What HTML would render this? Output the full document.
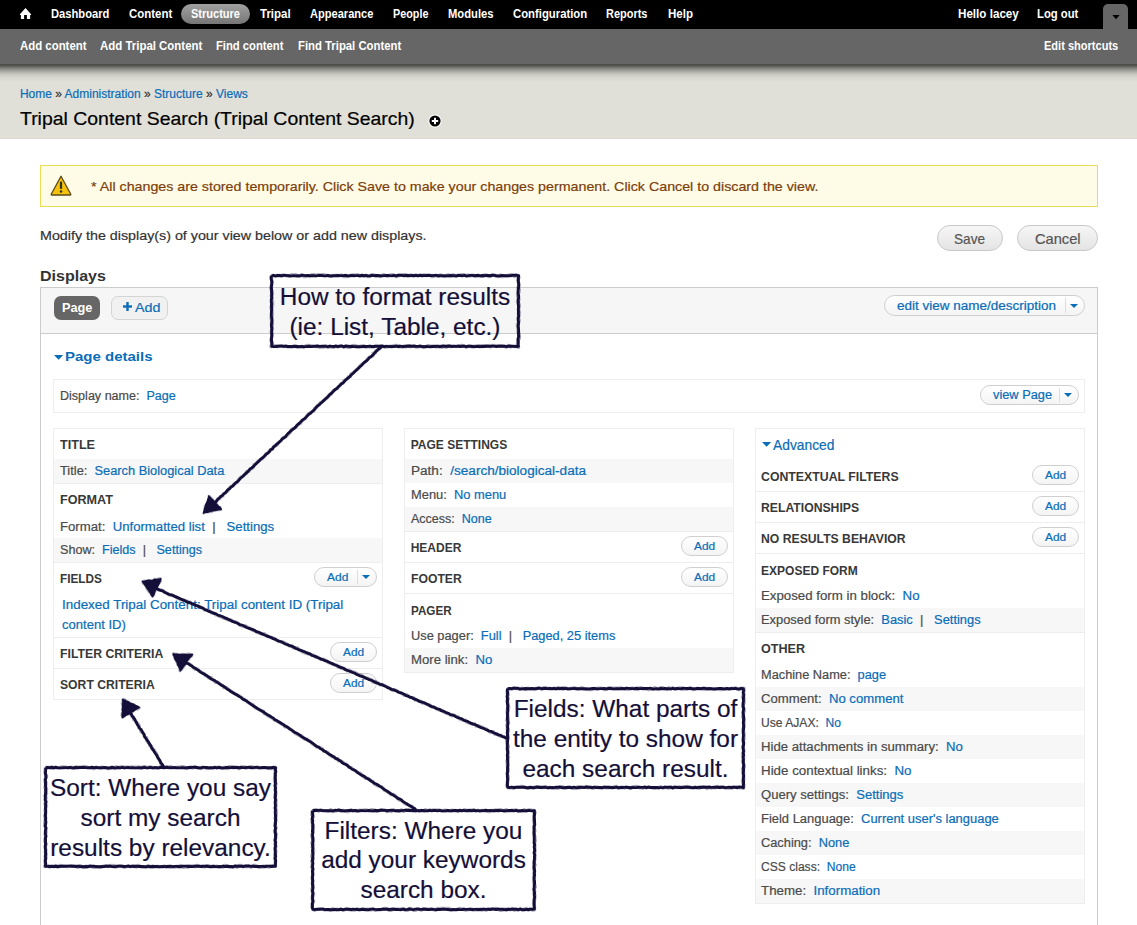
<!DOCTYPE html>
<html><head><meta charset="utf-8"><title>Tripal Content Search</title>
<style>
html,body{margin:0;padding:0;width:1137px;height:925px;overflow:hidden;background:#fff;font-family:'Liberation Sans', sans-serif}
.t{position:absolute;white-space:pre;-webkit-text-stroke:0.2px currentColor}
.t span{-webkit-text-stroke:0.2px currentColor}
</style></head><body>
<div style="position:absolute;left:0;top:0;width:1137px;height:29px;background:#000"></div>
<div style="position:absolute;left:0;top:29px;width:1137px;height:35px;background:#666"></div>
<div style="position:absolute;left:0;top:64px;width:1137px;height:74px;border-bottom:1px solid #dcdcd4;background:linear-gradient(#4c4d47 0px,#4e4f49 1px,#5c5d57 2px,#6c6d67 3px,#7d7e78 4px,#8b8c85 5px,#979892 6px,#a4a59e 7px,#aeafa7 8px,#bbbcb4 9px,#c3c4bc 10px,#cbcbc3 11px,#d0d0c8 12px,#d5d5cd 13px,#d8d8d0 14px,#dcdcd4 16px,#e0e0d8 18px,#e0e0d8 100%)"></div>
<svg style="position:absolute;left:20px;top:8px;overflow:visible" width="11" height="11" viewBox="0 0 11 11"><path d="M5.5 0.1 L11.1 6.2 L11.1 7 L10.1 7 L10.1 11 L6.9 11 L6.9 7 L4.1 7 L4.1 11 L0.9 11 L0.9 7 L-0.1 7 L-0.1 6.2 Z" fill="#fff"/></svg>
<div style="position:absolute;left:181px;top:4px;width:69px;height:20px;border-radius:10px;background:linear-gradient(#a0a0a0,#767676)"></div>
<div style="position:absolute;left:1103px;top:4px;width:25px;height:25px;background:#666;border-radius:5px 5px 0 0"></div>
<svg style="position:absolute;left:1111.5px;top:15px" width="8" height="5"><path d="M0.3 0 L7.7 0 L4 4.2 Z" fill="#000"/></svg>
<svg style="position:absolute;left:428px;top:114px" width="14" height="14" viewBox="0 0 14 14"><circle cx="7" cy="7" r="6.6" fill="#fff"/><circle cx="7" cy="7" r="5.6" fill="#000"/><rect x="3.8" y="6" width="6.4" height="2" fill="#fff"/><rect x="6" y="3.8" width="2" height="6.4" fill="#fff"/></svg>
<div style="position:absolute;left:40px;top:165px;width:1056px;height:40px;background:#fefce6;border:1px solid #ecdc55"></div>
<svg style="position:absolute;left:50px;top:175px" width="22" height="21" viewBox="0 0 22 21"><path d="M11 1.2 L20.8 19.3 Q21 20 20.2 20 L1.8 20 Q1 20 1.2 19.3 Z" fill="#f4c20d" stroke="#5a4a1a" stroke-width="1.3" stroke-linejoin="round"/><rect x="9.9" y="6.5" width="2.2" height="7.5" rx="1" fill="#333"/><circle cx="11" cy="16.6" r="1.25" fill="#333"/></svg>
<div style="position:absolute;left:937px;top:225px;width:64px;height:24px;border:1px solid #c8c8c8;border-radius:13px;background:linear-gradient(#f6f6f6,#e4e4e4)"></div>
<div style="position:absolute;left:1017px;top:225px;width:79px;height:24px;border:1px solid #c8c8c8;border-radius:13px;background:linear-gradient(#f6f6f6,#e4e4e4)"></div>
<div style="position:absolute;left:40px;top:287px;width:1056px;height:700px;border:1px solid #ccc;background:#fff"></div>
<div style="position:absolute;left:41px;top:288px;width:1056px;height:45px;background:#f6f6f6;border-bottom:1px solid #ccc"></div>
<div style="position:absolute;left:54px;top:296px;width:46px;height:24px;border-radius:7px;background:#666"></div>
<div style="position:absolute;left:111px;top:296px;width:55px;height:22px;border-radius:7px;background:#f1f1f1;border:1px solid #d4d4d4"></div>
<svg style="position:absolute;left:123px;top:302px" width="9" height="9"><rect x="3.3" y="0" width="2.4" height="9" fill="#0a6db8"/><rect x="0" y="3.3" width="9" height="2.4" fill="#0a6db8"/></svg>
<div style="position:absolute;left:884px;top:295px;width:199px;height:19px;border:1px solid #cfcfcf;border-radius:10.5px;background:linear-gradient(#fff,#f4f4f4)"></div>
<div style="position:absolute;left:1065px;top:298px;width:1px;height:15px;background:#ddd"></div>
<svg style="position:absolute;left:1070px;top:303.5px" width="8" height="4"><path d="M0 0 L8 0 L4 4 Z" fill="#0a6db8"/></svg>
<svg style="position:absolute;left:53.5px;top:355px" width="10" height="6"><path d="M0 0 L9.2 0 L4.6 4.8 Z" fill="#0a6db8"/></svg>
<div style="position:absolute;left:53px;top:379px;width:1030px;height:32px;border:1px solid #eee"></div>
<div style="position:absolute;left:980px;top:385px;width:97px;height:18px;border:1px solid #cfcfcf;border-radius:10.0px;background:linear-gradient(#fff,#f4f4f4)"></div>
<div style="position:absolute;left:1059px;top:388px;width:1px;height:14px;background:#ddd"></div>
<svg style="position:absolute;left:1064px;top:393.0px" width="8" height="4"><path d="M0 0 L8 0 L4 4 Z" fill="#0a6db8"/></svg>
<div style="position:absolute;left:53px;top:428px;width:328px;height:270px;border:1px solid #eee"></div>
<div style="position:absolute;left:404px;top:428px;width:328px;height:243px;border:1px solid #eee"></div>
<div style="position:absolute;left:755px;top:428px;width:328px;height:474px;border:1px solid #eee"></div>
<div style="position:absolute;left:54px;top:459px;width:328px;height:24px;background:#f7f7f7"></div>
<div style="position:absolute;left:54px;top:483px;width:328px;height:1px;background:#eee"></div>
<div style="position:absolute;left:54px;top:538px;width:328px;height:24px;background:#f7f7f7"></div>
<div style="position:absolute;left:54px;top:562px;width:328px;height:1px;background:#eee"></div>
<div style="position:absolute;left:54px;top:637px;width:328px;height:1px;background:#eee"></div>
<div style="position:absolute;left:54px;top:668px;width:328px;height:1px;background:#eee"></div>
<div style="position:absolute;left:314px;top:567px;width:61px;height:18px;border:1px solid #cfcfcf;border-radius:10.0px;background:linear-gradient(#fff,#f4f4f4)"></div>
<div style="position:absolute;left:357px;top:570px;width:1px;height:14px;background:#ddd"></div>
<svg style="position:absolute;left:362px;top:575.0px" width="8" height="4"><path d="M0 0 L8 0 L4 4 Z" fill="#0a6db8"/></svg>
<div style="position:absolute;left:330px;top:642px;width:45px;height:18px;border:1px solid #cfcfcf;border-radius:10.0px;background:linear-gradient(#fff,#f4f4f4)"></div>
<div style="position:absolute;left:330px;top:673px;width:45px;height:18px;border:1px solid #cfcfcf;border-radius:10.0px;background:linear-gradient(#fff,#f4f4f4)"></div>
<div style="position:absolute;left:405px;top:459px;width:328px;height:24px;background:#f7f7f7"></div>
<div style="position:absolute;left:405px;top:507px;width:328px;height:24px;background:#f7f7f7"></div>
<div style="position:absolute;left:405px;top:531px;width:328px;height:1px;background:#eee"></div>
<div style="position:absolute;left:405px;top:562px;width:328px;height:1px;background:#eee"></div>
<div style="position:absolute;left:405px;top:593px;width:328px;height:1px;background:#eee"></div>
<div style="position:absolute;left:405px;top:648px;width:328px;height:24px;background:#f7f7f7"></div>
<div style="position:absolute;left:681px;top:536px;width:45px;height:18px;border:1px solid #cfcfcf;border-radius:10.0px;background:linear-gradient(#fff,#f4f4f4)"></div>
<div style="position:absolute;left:681px;top:567px;width:45px;height:18px;border:1px solid #cfcfcf;border-radius:10.0px;background:linear-gradient(#fff,#f4f4f4)"></div>
<svg style="position:absolute;left:761.7px;top:442px" width="10" height="6"><path d="M0 0 L9.2 0 L4.6 4.8 Z" fill="#0a6db8"/></svg>
<div style="position:absolute;left:756px;top:491px;width:328px;height:1px;background:#eee"></div>
<div style="position:absolute;left:756px;top:522px;width:328px;height:1px;background:#eee"></div>
<div style="position:absolute;left:756px;top:553px;width:328px;height:1px;background:#eee"></div>
<div style="position:absolute;left:756px;top:608px;width:328px;height:24px;background:#f7f7f7"></div>
<div style="position:absolute;left:756px;top:632px;width:328px;height:1px;background:#eee"></div>
<div style="position:absolute;left:1032px;top:465px;width:45px;height:18px;border:1px solid #cfcfcf;border-radius:10.0px;background:linear-gradient(#fff,#f4f4f4)"></div>
<div style="position:absolute;left:1032px;top:496px;width:45px;height:18px;border:1px solid #cfcfcf;border-radius:10.0px;background:linear-gradient(#fff,#f4f4f4)"></div>
<div style="position:absolute;left:1032px;top:527px;width:45px;height:18px;border:1px solid #cfcfcf;border-radius:10.0px;background:linear-gradient(#fff,#f4f4f4)"></div>
<div style="position:absolute;left:756px;top:687px;width:328px;height:24px;background:#f7f7f7"></div>
<div style="position:absolute;left:756px;top:735px;width:328px;height:24px;background:#f7f7f7"></div>
<div style="position:absolute;left:756px;top:783px;width:328px;height:24px;background:#f7f7f7"></div>
<div style="position:absolute;left:756px;top:831px;width:328px;height:24px;background:#f7f7f7"></div>
<div style="position:absolute;left:756px;top:879px;width:328px;height:24px;background:#f7f7f7"></div>
<div class=t style="left:50.50px;top:6.34px;line-height:17px;transform:scaleX(0.9316);transform-origin:0 0;font-size:12px;font-weight:bold;color:#fff;letter-spacing:0px;-webkit-text-stroke:0">Dashboard</div>
<div class=t style="left:128.60px;top:6.34px;line-height:17px;transform:scaleX(0.9531);transform-origin:0 0;font-size:12px;font-weight:bold;color:#fff;letter-spacing:0px;-webkit-text-stroke:0">Content</div>
<div class=t style="left:190.70px;top:6.34px;line-height:17px;transform:scaleX(0.9186);transform-origin:0 0;font-size:12px;font-weight:bold;color:#fff;letter-spacing:0px;-webkit-text-stroke:0">Structure</div>
<div class=t style="left:259.80px;top:6.34px;line-height:17px;transform:scaleX(0.9589);transform-origin:0 0;font-size:12px;font-weight:bold;color:#fff;letter-spacing:0px;-webkit-text-stroke:0">Tripal</div>
<div class=t style="left:310.10px;top:6.34px;line-height:17px;transform:scaleX(0.9228);transform-origin:0 0;font-size:12px;font-weight:bold;color:#fff;letter-spacing:0px;-webkit-text-stroke:0">Appearance</div>
<div class=t style="left:393.10px;top:6.34px;line-height:17px;transform:scaleX(0.8994);transform-origin:0 0;font-size:12px;font-weight:bold;color:#fff;letter-spacing:0px;-webkit-text-stroke:0">People</div>
<div class=t style="left:448.20px;top:6.34px;line-height:17px;transform:scaleX(0.9348);transform-origin:0 0;font-size:12px;font-weight:bold;color:#fff;letter-spacing:0px;-webkit-text-stroke:0">Modules</div>
<div class=t style="left:512.80px;top:6.34px;line-height:17px;transform:scaleX(0.9433);transform-origin:0 0;font-size:12px;font-weight:bold;color:#fff;letter-spacing:0px;-webkit-text-stroke:0">Configuration</div>
<div class=t style="left:606.40px;top:6.34px;line-height:17px;transform:scaleX(0.9130);transform-origin:0 0;font-size:12px;font-weight:bold;color:#fff;letter-spacing:0px;-webkit-text-stroke:0">Reports</div>
<div class=t style="left:667.50px;top:6.34px;line-height:17px;transform:scaleX(0.9610);transform-origin:0 0;font-size:12px;font-weight:bold;color:#fff;letter-spacing:0px;-webkit-text-stroke:0">Help</div>
<div class=t style="left:957.50px;top:6.34px;line-height:17px;transform:scaleX(0.9696);transform-origin:0 0;font-size:12px;font-weight:bold;color:#fff;letter-spacing:0px;-webkit-text-stroke:0">Hello lacey</div>
<div class=t style="left:1037.20px;top:6.34px;line-height:17px;transform:scaleX(0.9390);transform-origin:0 0;font-size:12px;font-weight:bold;color:#fff;letter-spacing:0px;-webkit-text-stroke:0">Log out</div>
<div class=t style="left:19.50px;top:37.64px;line-height:17px;transform:scaleX(0.9500);transform-origin:0 0;font-size:12px;font-weight:bold;color:#fff;letter-spacing:0px;-webkit-text-stroke:0">Add content</div>
<div class=t style="left:99.80px;top:37.64px;line-height:17px;transform:scaleX(0.9532);transform-origin:0 0;font-size:12px;font-weight:bold;color:#fff;letter-spacing:0px;-webkit-text-stroke:0">Add Tripal Content</div>
<div class=t style="left:216.20px;top:37.64px;line-height:17px;transform:scaleX(0.9375);transform-origin:0 0;font-size:12px;font-weight:bold;color:#fff;letter-spacing:0px;-webkit-text-stroke:0">Find content</div>
<div class=t style="left:298.40px;top:37.64px;line-height:17px;transform:scaleX(0.9439);transform-origin:0 0;font-size:12px;font-weight:bold;color:#fff;letter-spacing:0px;-webkit-text-stroke:0">Find Tripal Content</div>
<div class=t style="left:1044.00px;top:37.64px;line-height:17px;transform:scaleX(0.9198);transform-origin:0 0;font-size:12px;font-weight:bold;color:#fff;letter-spacing:0px;-webkit-text-stroke:0">Edit shortcuts</div>
<div class=t style="left:19.90px;top:86.04px;line-height:17px;font-size:12px;font-weight:normal;color:#0a6db8;letter-spacing:0px;"><span style="color:#0a6db8">Home</span> <span style="color:#333">»</span> <span style="color:#0a6db8">Administration</span> <span style="color:#333">»</span> <span style="color:#0a6db8">Structure</span> <span style="color:#333">»</span> <span style="color:#0a6db8">Views</span></div>
<div class=t style="left:19.50px;top:107.16px;line-height:25px;transform:scaleX(1.0792);transform-origin:0 0;font-size:18px;font-weight:normal;color:#000;letter-spacing:0px;">Tripal Content Search (Tripal Content Search)</div>
<div class=t style="left:91.10px;top:178.40px;line-height:18px;transform:scaleX(1.0958);transform-origin:0 0;font-size:13px;font-weight:normal;color:#7d3f0c;letter-spacing:0px;">* All changes are stored temporarily. Click Save to make your changes permanent. Click Cancel to discard the view.</div>
<div class=t style="left:40.00px;top:227.20px;line-height:18px;transform:scaleX(1.0984);transform-origin:0 0;font-size:13px;font-weight:normal;color:#333;letter-spacing:0px;">Modify the display(s) of your view below or add new displays.</div>
<div class=t style="left:953.80px;top:229.28px;line-height:20px;transform:scaleX(0.9376);transform-origin:0 0;font-size:14.5px;font-weight:normal;color:#555;letter-spacing:0px;">Save</div>
<div class=t style="left:1034.50px;top:229.28px;line-height:20px;transform:scaleX(1.0102);transform-origin:0 0;font-size:14.5px;font-weight:normal;color:#555;letter-spacing:0px;">Cancel</div>
<div class=t style="left:40.20px;top:265.00px;line-height:21px;transform:scaleX(1.0680);transform-origin:0 0;font-size:15px;font-weight:bold;color:#333;letter-spacing:0px;-webkit-text-stroke:0;">Displays</div>
<div class=t style="left:61.50px;top:300.14px;line-height:17px;transform:scaleX(1.0597);transform-origin:0 0;font-size:12px;font-weight:bold;color:#fff;letter-spacing:0px;-webkit-text-stroke:0;">Page</div>
<div class=t style="left:134.50px;top:299.30px;line-height:18px;transform:scaleX(1.0976);transform-origin:0 0;font-size:13px;font-weight:normal;color:#0a6db8;letter-spacing:0px;">Add</div>
<div class=t style="left:897.00px;top:297.64px;line-height:17px;transform:scaleX(1.1244);transform-origin:0 0;font-size:12px;font-weight:normal;color:#0a6db8;letter-spacing:0px;">edit view name/description</div>
<div class=t style="left:65.00px;top:347.70px;line-height:18px;transform:scaleX(1.1532);transform-origin:0 0;font-size:13px;font-weight:bold;color:#0a6db8;letter-spacing:0px;-webkit-text-stroke:0;">Page details</div>
<div class=t style="left:60.00px;top:388.04px;line-height:17px;transform:scaleX(1.0457);transform-origin:0 0;font-size:12px;font-weight:normal;color:#4a4a4a;letter-spacing:0px;"><span style="color:#4a4a4a">Display name:</span>  <span style="color:#0a6db8">Page</span></div>
<div class=t style="left:992.50px;top:386.84px;line-height:17px;transform:scaleX(1.0655);transform-origin:0 0;font-size:12px;font-weight:normal;color:#0a6db8;letter-spacing:0px;">view Page</div>
<div class=t style="left:60.00px;top:437.24px;line-height:17px;transform:scaleX(1.0502);transform-origin:0 0;font-size:12px;font-weight:bold;color:#383838;letter-spacing:0px;-webkit-text-stroke:0;">TITLE</div>
<div class=t style="left:60.00px;top:463.24px;line-height:17px;transform:scaleX(1.0694);transform-origin:0 0;font-size:12px;font-weight:normal;color:#333;letter-spacing:0px;"><span style="color:#4a4a4a">Title:</span>  <span style="color:#0a6db8">Search Biological Data</span></div>
<div class=t style="left:60.10px;top:492.34px;line-height:17px;transform:scaleX(1.0508);transform-origin:0 0;font-size:12px;font-weight:bold;color:#383838;letter-spacing:0px;-webkit-text-stroke:0;">FORMAT</div>
<div class=t style="left:60.00px;top:518.54px;line-height:17px;transform:scaleX(1.0968);transform-origin:0 0;font-size:12px;font-weight:normal;color:#333;letter-spacing:0px;"><span style="color:#4a4a4a">Format:</span>  <span style="color:#0a6db8">Unformatted list</span><span style="color:#4a4a4a">  |   </span><span style="color:#0a6db8">Settings</span></div>
<div class=t style="left:60.00px;top:542.24px;line-height:17px;transform:scaleX(1.0503);transform-origin:0 0;font-size:12px;font-weight:normal;color:#333;letter-spacing:0px;"><span style="color:#4a4a4a">Show:</span>  <span style="color:#0a6db8">Fields</span><span style="color:#4a4a4a">  |   </span><span style="color:#0a6db8">Settings</span></div>
<div class=t style="left:60.00px;top:570.84px;line-height:17px;transform:scaleX(0.9819);transform-origin:0 0;font-size:12px;font-weight:bold;color:#383838;letter-spacing:0px;-webkit-text-stroke:0;">FIELDS</div>
<div class=t style="left:326.80px;top:570.39px;line-height:15px;transform:scaleX(1.0879);transform-origin:0 0;font-size:11px;font-weight:normal;color:#0a6db8;letter-spacing:0px;">Add</div>
<div class=t style="left:62.10px;top:597.04px;line-height:17px;transform:scaleX(1.1177);transform-origin:0 0;font-size:12px;font-weight:normal;color:#333;letter-spacing:0px;"><span style="color:#0a6db8">Indexed Tripal Content: Tripal content ID (Tripal</span></div>
<div class=t style="left:62.10px;top:616.84px;line-height:17px;transform:scaleX(1.0885);transform-origin:0 0;font-size:12px;font-weight:normal;color:#333;letter-spacing:0px;"><span style="color:#0a6db8">content ID)</span></div>
<div class=t style="left:60.00px;top:646.24px;line-height:17px;transform:scaleX(1.0217);transform-origin:0 0;font-size:12px;font-weight:bold;color:#383838;letter-spacing:0px;-webkit-text-stroke:0;">FILTER CRITERIA</div>
<div class=t style="left:342.70px;top:645.29px;line-height:15px;transform:scaleX(1.0777);transform-origin:0 0;font-size:11px;font-weight:normal;color:#0a6db8;letter-spacing:0px;">Add</div>
<div class=t style="left:60.00px;top:677.24px;line-height:17px;transform:scaleX(1.0145);transform-origin:0 0;font-size:12px;font-weight:bold;color:#383838;letter-spacing:0px;-webkit-text-stroke:0;">SORT CRITERIA</div>
<div class=t style="left:342.70px;top:676.29px;line-height:15px;transform:scaleX(1.0777);transform-origin:0 0;font-size:11px;font-weight:normal;color:#0a6db8;letter-spacing:0px;">Add</div>
<div class=t style="left:410.70px;top:437.44px;line-height:17px;font-size:12px;font-weight:bold;color:#383838;letter-spacing:0px;-webkit-text-stroke:0;">PAGE SETTINGS</div>
<div class=t style="left:410.70px;top:462.54px;line-height:17px;transform:scaleX(1.1306);transform-origin:0 0;font-size:12px;font-weight:normal;color:#333;letter-spacing:0px;"><span style="color:#4a4a4a">Path:</span>  <span style="color:#0a6db8">/search/biological-data</span></div>
<div class=t style="left:410.70px;top:486.84px;line-height:17px;transform:scaleX(1.0740);transform-origin:0 0;font-size:12px;font-weight:normal;color:#333;letter-spacing:0px;"><span style="color:#4a4a4a">Menu:</span>  <span style="color:#0a6db8">No menu</span></div>
<div class=t style="left:410.70px;top:511.24px;line-height:17px;transform:scaleX(1.0430);transform-origin:0 0;font-size:12px;font-weight:normal;color:#333;letter-spacing:0px;"><span style="color:#4a4a4a">Access:</span>  <span style="color:#0a6db8">None</span></div>
<div class=t style="left:410.70px;top:539.94px;line-height:17px;font-size:12px;font-weight:bold;color:#383838;letter-spacing:0px;-webkit-text-stroke:0;">HEADER</div>
<div class=t style="left:693.70px;top:539.29px;line-height:15px;transform:scaleX(1.0777);transform-origin:0 0;font-size:11px;font-weight:normal;color:#0a6db8;letter-spacing:0px;">Add</div>
<div class=t style="left:410.70px;top:570.94px;line-height:17px;transform:scaleX(1.0160);transform-origin:0 0;font-size:12px;font-weight:bold;color:#383838;letter-spacing:0px;-webkit-text-stroke:0;">FOOTER</div>
<div class=t style="left:693.70px;top:570.29px;line-height:15px;transform:scaleX(1.0777);transform-origin:0 0;font-size:11px;font-weight:normal;color:#0a6db8;letter-spacing:0px;">Add</div>
<div class=t style="left:410.70px;top:602.84px;line-height:17px;transform:scaleX(0.9738);transform-origin:0 0;font-size:12px;font-weight:bold;color:#383838;letter-spacing:0px;-webkit-text-stroke:0;">PAGER</div>
<div class=t style="left:410.70px;top:627.84px;line-height:17px;transform:scaleX(1.0683);transform-origin:0 0;font-size:12px;font-weight:normal;color:#333;letter-spacing:0px;"><span style="color:#4a4a4a">Use pager:</span>  <span style="color:#0a6db8">Full</span><span style="color:#4a4a4a">  |   </span><span style="color:#0a6db8">Paged, 25 items</span></div>
<div class=t style="left:410.70px;top:652.24px;line-height:17px;transform:scaleX(1.0982);transform-origin:0 0;font-size:12px;font-weight:normal;color:#333;letter-spacing:0px;"><span style="color:#4a4a4a">More link:</span>  <span style="color:#0a6db8">No</span></div>
<div class=t style="left:773.40px;top:435.45px;line-height:20px;transform:scaleX(0.9859);transform-origin:0 0;font-size:14px;font-weight:normal;color:#0a6db8;letter-spacing:0px;">Advanced</div>
<div class=t style="left:761.10px;top:469.24px;line-height:17px;transform:scaleX(1.0251);transform-origin:0 0;font-size:12px;font-weight:bold;color:#383838;letter-spacing:0px;-webkit-text-stroke:0;">CONTEXTUAL FILTERS</div>
<div class=t style="left:1044.70px;top:468.29px;line-height:15px;transform:scaleX(1.0777);transform-origin:0 0;font-size:11px;font-weight:normal;color:#0a6db8;letter-spacing:0px;">Add</div>
<div class=t style="left:761.10px;top:500.34px;line-height:17px;transform:scaleX(1.0171);transform-origin:0 0;font-size:12px;font-weight:bold;color:#383838;letter-spacing:0px;-webkit-text-stroke:0;">RELATIONSHIPS</div>
<div class=t style="left:1044.70px;top:499.29px;line-height:15px;transform:scaleX(1.0777);transform-origin:0 0;font-size:11px;font-weight:normal;color:#0a6db8;letter-spacing:0px;">Add</div>
<div class=t style="left:761.10px;top:531.44px;line-height:17px;transform:scaleX(1.0166);transform-origin:0 0;font-size:12px;font-weight:bold;color:#383838;letter-spacing:0px;-webkit-text-stroke:0;">NO RESULTS BEHAVIOR</div>
<div class=t style="left:1044.70px;top:530.29px;line-height:15px;transform:scaleX(1.0777);transform-origin:0 0;font-size:11px;font-weight:normal;color:#0a6db8;letter-spacing:0px;">Add</div>
<div class=t style="left:761.10px;top:562.54px;line-height:17px;font-size:12px;font-weight:bold;color:#383838;letter-spacing:0px;-webkit-text-stroke:0;">EXPOSED FORM</div>
<div class=t style="left:761.10px;top:587.94px;line-height:17px;transform:scaleX(1.1053);transform-origin:0 0;font-size:12px;font-weight:normal;color:#333;letter-spacing:0px;"><span style="color:#4a4a4a">Exposed form in block:</span>  <span style="color:#0a6db8">No</span></div>
<div class=t style="left:761.10px;top:612.04px;line-height:17px;transform:scaleX(1.0736);transform-origin:0 0;font-size:12px;font-weight:normal;color:#333;letter-spacing:0px;"><span style="color:#4a4a4a">Exposed form style:</span>  <span style="color:#0a6db8">Basic</span><span style="color:#4a4a4a">  |   </span><span style="color:#0a6db8">Settings</span></div>
<div class=t style="left:761.10px;top:640.74px;line-height:17px;transform:scaleX(1.0476);transform-origin:0 0;font-size:12px;font-weight:bold;color:#383838;letter-spacing:0px;-webkit-text-stroke:0;">OTHER</div>
<div class=t style="left:761.10px;top:666.74px;line-height:17px;transform:scaleX(1.0645);transform-origin:0 0;font-size:12px;font-weight:normal;color:#333;letter-spacing:0px;"><span style="color:#4a4a4a">Machine Name:</span>  <span style="color:#0a6db8">page</span></div>
<div class=t style="left:761.10px;top:690.74px;line-height:17px;transform:scaleX(1.0949);transform-origin:0 0;font-size:12px;font-weight:normal;color:#333;letter-spacing:0px;"><span style="color:#4a4a4a">Comment:</span>  <span style="color:#0a6db8">No comment</span></div>
<div class=t style="left:761.10px;top:714.74px;line-height:17px;transform:scaleX(1.0079);transform-origin:0 0;font-size:12px;font-weight:normal;color:#333;letter-spacing:0px;"><span style="color:#4a4a4a">Use AJAX:</span>  <span style="color:#0a6db8">No</span></div>
<div class=t style="left:761.10px;top:738.74px;line-height:17px;transform:scaleX(1.0963);transform-origin:0 0;font-size:12px;font-weight:normal;color:#333;letter-spacing:0px;"><span style="color:#4a4a4a">Hide attachments in summary:</span>  <span style="color:#0a6db8">No</span></div>
<div class=t style="left:761.10px;top:762.74px;line-height:17px;transform:scaleX(1.1115);transform-origin:0 0;font-size:12px;font-weight:normal;color:#333;letter-spacing:0px;"><span style="color:#4a4a4a">Hide contextual links:</span>  <span style="color:#0a6db8">No</span></div>
<div class=t style="left:761.10px;top:786.74px;line-height:17px;transform:scaleX(1.0892);transform-origin:0 0;font-size:12px;font-weight:normal;color:#333;letter-spacing:0px;"><span style="color:#4a4a4a">Query settings:</span>  <span style="color:#0a6db8">Settings</span></div>
<div class=t style="left:761.10px;top:810.74px;line-height:17px;transform:scaleX(1.0787);transform-origin:0 0;font-size:12px;font-weight:normal;color:#333;letter-spacing:0px;"><span style="color:#4a4a4a">Field Language:</span>  <span style="color:#0a6db8">Current user's language</span></div>
<div class=t style="left:761.10px;top:834.74px;line-height:17px;transform:scaleX(1.0673);transform-origin:0 0;font-size:12px;font-weight:normal;color:#333;letter-spacing:0px;"><span style="color:#4a4a4a">Caching:</span>  <span style="color:#0a6db8">None</span></div>
<div class=t style="left:761.10px;top:858.74px;line-height:17px;transform:scaleX(1.0059);transform-origin:0 0;font-size:12px;font-weight:normal;color:#333;letter-spacing:0px;"><span style="color:#4a4a4a">CSS class:</span>  <span style="color:#0a6db8">None</span></div>
<div class=t style="left:761.10px;top:882.74px;line-height:17px;transform:scaleX(1.1090);transform-origin:0 0;font-size:12px;font-weight:normal;color:#333;letter-spacing:0px;"><span style="color:#4a4a4a">Theme:</span>  <span style="color:#0a6db8">Information</span></div>
<div class=t style="left:279.78px;top:279.75px;line-height:34px;font-size:24.4px;font-weight:normal;color:#140f38;letter-spacing:0px;">How to format results</div>
<div class=t style="left:289.48px;top:309.95px;line-height:34px;font-size:24.4px;font-weight:normal;color:#140f38;letter-spacing:0px;">(ie: List, Table, etc.)</div>
<div class=t style="left:513.66px;top:692.05px;line-height:34px;font-size:24.4px;font-weight:normal;color:#140f38;letter-spacing:0px;">Fields: What parts of</div>
<div class=t style="left:512.97px;top:721.55px;line-height:34px;font-size:24.4px;font-weight:normal;color:#140f38;letter-spacing:0px;">the entity to show for</div>
<div class=t style="left:522.46px;top:751.55px;line-height:34px;font-size:24.4px;font-weight:normal;color:#140f38;letter-spacing:0px;">each search result.</div>
<div class=t style="left:50.02px;top:771.45px;line-height:34px;font-size:24.4px;font-weight:normal;color:#140f38;letter-spacing:0px;">Sort: Where you say</div>
<div class=t style="left:80.53px;top:801.15px;line-height:34px;font-size:24.4px;font-weight:normal;color:#140f38;letter-spacing:0px;">sort my search</div>
<div class=t style="left:50.24px;top:830.85px;line-height:34px;font-size:24.4px;font-weight:normal;color:#140f38;letter-spacing:0px;">results by relevancy.</div>
<div class=t style="left:324.55px;top:814.35px;line-height:34px;font-size:24.4px;font-weight:normal;color:#140f38;letter-spacing:0px;">Filters: Where you</div>
<div class=t style="left:321.14px;top:843.45px;line-height:34px;font-size:24.4px;font-weight:normal;color:#140f38;letter-spacing:0px;">add your keywords</div>
<div class=t style="left:360.45px;top:873.05px;line-height:34px;font-size:24.4px;font-weight:normal;color:#140f38;letter-spacing:0px;">search box.</div>
<svg style="position:absolute;left:0;top:0" width="1137" height="925"><g><path d="M271.60 275.51 L273.61 275.71 L275.61 276.36 L277.62 275.54 L279.63 275.61 L281.63 275.76 L283.64 275.03 L285.65 275.62 L287.65 275.83 L289.66 276.13 L291.67 274.87 L293.67 275.25 L295.68 274.86 L297.68 276.16 L299.69 275.95 L301.70 274.78 L303.70 276.47 L305.71 276.44 L307.72 275.88 L309.72 275.81 L311.73 274.98 L313.74 274.73 L315.74 275.65 L317.75 274.81 L319.76 275.04 L321.76 275.14 L323.77 274.75 L325.78 275.54 L327.78 275.49 L329.79 276.22 L331.80 275.63 L333.80 275.85 L335.81 275.60 L337.81 275.89 L339.82 275.52 L341.83 275.20 L343.83 276.50 L345.84 276.49 L347.85 276.21 L349.85 275.97 L351.86 275.27 L353.87 275.11 L355.87 275.22 L357.88 274.83 L359.89 276.08 L361.89 275.42 L363.90 276.22 L365.91 275.40 L367.91 276.42 L369.92 276.23 L371.93 274.70 L373.93 275.08 L375.94 276.34 L377.94 275.55 L379.95 276.46 L381.96 275.42 L383.96 274.83 L385.97 275.83 L387.98 276.10 L389.98 275.19 L391.99 274.86 L394.00 275.30 L396.00 276.44 L398.01 276.06 L400.02 274.91 L402.02 275.14 L404.03 274.88 L406.04 274.81 L408.04 276.13 L410.05 275.02 L412.06 275.71 L414.06 275.51 L416.07 275.04 L418.07 276.02 L420.08 274.94 L422.09 275.86 L424.09 274.91 L426.10 275.46 L428.11 275.08 L430.11 275.19 L432.12 276.45 L434.13 276.15 L436.13 275.25 L438.14 276.29 L440.15 275.08 L442.15 275.41 L444.16 276.24 L446.17 275.86 L448.17 274.88 L450.18 276.48 L452.19 275.08 L454.19 275.16 L456.20 276.09 L458.20 275.29 L460.21 275.23 L462.22 274.83 L464.22 274.86 L466.23 275.75 L468.24 275.14 L470.24 275.78 L472.25 275.37 L474.26 275.52 L476.26 276.43 L478.27 275.57 L480.28 275.73 L482.28 276.26 L484.29 275.03 L486.30 274.98 L488.30 276.34 L490.31 276.17 L492.32 275.15 L494.32 275.04 L496.33 276.03 L498.33 276.39 L500.34 275.05 L502.35 276.41 L504.35 276.29 L506.36 275.79 L508.37 275.46 L510.37 274.89 L512.38 274.77 L514.39 276.43 L516.39 275.13 L518.03 275.60 L518.84 277.62 L517.82 279.65 L518.23 281.67 L518.77 283.69 L518.98 285.71 L518.00 287.74 L519.18 289.76 L518.89 291.78 L518.29 293.81 L517.77 295.83 L518.19 297.85 L518.80 299.87 L517.65 301.90 L518.93 303.92 L519.27 305.94 L518.82 307.97 L518.50 309.99 L519.19 312.01 L518.98 314.03 L518.64 316.06 L518.27 318.08 L519.06 320.10 L518.65 322.13 L517.70 324.15 L517.54 326.17 L518.12 328.19 L518.06 330.22 L518.25 332.24 L519.05 334.26 L519.24 336.29 L519.27 338.31 L517.66 340.33 L518.04 342.35 L517.57 344.38 L518.40 347.26 L516.39 346.15 L514.39 346.43 L512.38 345.99 L510.37 346.73 L508.37 345.50 L506.36 347.16 L504.35 346.32 L502.35 345.97 L500.34 345.68 L498.33 345.97 L496.33 346.03 L494.32 345.87 L492.32 345.65 L490.31 346.67 L488.30 346.07 L486.30 345.68 L484.29 345.73 L482.28 346.55 L480.28 345.88 L478.27 345.75 L476.26 346.27 L474.26 346.18 L472.25 346.61 L470.24 346.25 L468.24 346.20 L466.23 347.16 L464.22 346.15 L462.22 345.51 L460.21 345.72 L458.20 345.99 L456.20 346.60 L454.19 345.98 L452.19 346.25 L450.18 346.51 L448.17 345.79 L446.17 347.15 L444.16 345.95 L442.15 347.25 L440.15 346.22 L438.14 346.43 L436.13 346.89 L434.13 346.04 L432.12 346.40 L430.11 346.19 L428.11 345.64 L426.10 346.84 L424.09 347.28 L422.09 346.76 L420.08 346.08 L418.07 346.94 L416.07 346.99 L414.06 345.67 L412.06 346.11 L410.05 346.50 L408.04 345.69 L406.04 346.71 L404.03 346.10 L402.02 346.94 L400.02 346.52 L398.01 345.85 L396.00 345.65 L394.00 345.72 L391.99 346.61 L389.98 346.25 L387.98 346.73 L385.97 347.05 L383.96 346.41 L381.96 345.79 L379.95 345.77 L377.94 346.02 L375.94 345.59 L373.93 346.80 L371.93 347.00 L369.92 346.49 L367.91 346.80 L365.91 346.91 L363.90 346.55 L361.89 346.17 L359.89 346.41 L357.88 346.73 L355.87 345.79 L353.87 345.53 L351.86 346.49 L349.85 347.17 L347.85 347.24 L345.84 345.73 L343.83 347.23 L341.83 346.02 L339.82 346.27 L337.81 346.74 L335.81 345.88 L333.80 347.27 L331.80 347.06 L329.79 346.48 L327.78 347.26 L325.78 345.81 L323.77 346.87 L321.76 347.05 L319.76 347.22 L317.75 346.17 L315.74 346.50 L313.74 346.17 L311.73 346.12 L309.72 345.85 L307.72 345.57 L305.71 346.07 L303.70 346.94 L301.70 346.44 L299.69 346.98 L297.68 347.28 L295.68 346.45 L293.67 346.01 L291.67 346.98 L289.66 346.81 L287.65 346.68 L285.65 346.04 L283.64 346.36 L281.63 346.19 L279.63 345.94 L277.62 346.59 L275.61 345.87 L273.61 345.67 L270.86 346.40 L272.38 344.38 L272.00 342.35 L270.93 340.33 L271.52 338.31 L271.83 336.29 L272.34 334.26 L271.38 332.24 L271.72 330.22 L272.28 328.19 L272.13 326.17 L272.40 324.15 L271.53 322.13 L271.87 320.10 L271.07 318.08 L272.00 316.06 L272.17 314.03 L271.85 312.01 L271.99 309.99 L271.08 307.97 L272.32 305.94 L272.46 303.92 L272.46 301.90 L271.67 299.87 L272.12 297.85 L271.28 295.83 L272.34 293.81 L272.24 291.78 L271.33 289.76 L270.85 287.74 L271.49 285.71 L271.69 283.69 L272.08 281.67 L271.58 279.65 L270.75 277.62 L271.60 275.60" fill="none" stroke="#140f38" stroke-opacity="0.35" stroke-width="3.6" stroke-linejoin="round"/><path d="M271.60 275.82 L273.61 275.29 L275.61 275.81 L277.62 275.37 L279.63 275.48 L281.63 275.80 L283.64 275.35 L285.65 275.35 L287.65 275.61 L289.66 275.76 L291.67 275.84 L293.67 275.73 L295.68 275.91 L297.68 275.59 L299.69 275.91 L301.70 275.31 L303.70 275.40 L305.71 275.62 L307.72 275.45 L309.72 275.76 L311.73 275.70 L313.74 275.62 L315.74 275.84 L317.75 275.64 L319.76 275.47 L321.76 275.52 L323.77 275.84 L325.78 275.88 L327.78 275.40 L329.79 275.85 L331.80 275.93 L333.80 275.62 L335.81 275.65 L337.81 275.39 L339.82 275.63 L341.83 275.60 L343.83 275.67 L345.84 275.27 L347.85 275.93 L349.85 275.61 L351.86 275.53 L353.87 275.81 L355.87 275.64 L357.88 275.59 L359.89 275.73 L361.89 275.30 L363.90 275.63 L365.91 275.54 L367.91 275.92 L369.92 275.90 L371.93 275.44 L373.93 275.58 L375.94 275.34 L377.94 275.55 L379.95 275.82 L381.96 275.88 L383.96 275.58 L385.97 275.47 L387.98 275.38 L389.98 275.68 L391.99 275.90 L394.00 275.34 L396.00 275.80 L398.01 275.27 L400.02 275.39 L402.02 275.41 L404.03 275.73 L406.04 275.48 L408.04 275.50 L410.05 275.68 L412.06 275.32 L414.06 275.76 L416.07 275.34 L418.07 275.61 L420.08 275.43 L422.09 275.39 L424.09 275.62 L426.10 275.56 L428.11 275.51 L430.11 275.54 L432.12 275.62 L434.13 275.36 L436.13 275.39 L438.14 275.69 L440.15 275.70 L442.15 275.62 L444.16 275.85 L446.17 275.68 L448.17 275.85 L450.18 275.41 L452.19 275.77 L454.19 275.82 L456.20 275.88 L458.20 275.47 L460.21 275.47 L462.22 275.90 L464.22 275.40 L466.23 275.95 L468.24 275.87 L470.24 275.34 L472.25 275.42 L474.26 275.76 L476.26 275.43 L478.27 275.32 L480.28 275.83 L482.28 275.55 L484.29 275.80 L486.30 275.34 L488.30 275.53 L490.31 275.73 L492.32 275.26 L494.32 275.39 L496.33 275.73 L498.33 275.89 L500.34 275.93 L502.35 275.33 L504.35 275.60 L506.36 275.78 L508.37 275.60 L510.37 275.73 L512.38 275.38 L514.39 275.30 L516.39 275.32 L518.72 275.60 L518.36 277.62 L518.39 279.65 L518.35 281.67 L518.65 283.69 L518.62 285.71 L518.61 287.74 L518.16 289.76 L518.06 291.78 L518.10 293.81 L518.68 295.83 L518.71 297.85 L518.08 299.87 L518.43 301.90 L518.21 303.92 L518.52 305.94 L518.42 307.97 L518.39 309.99 L518.45 312.01 L518.33 314.03 L518.74 316.06 L518.26 318.08 L518.16 320.10 L518.62 322.13 L518.43 324.15 L518.23 326.17 L518.47 328.19 L518.61 330.22 L518.63 332.24 L518.39 334.26 L518.74 336.29 L518.12 338.31 L518.19 340.33 L518.26 342.35 L518.15 344.38 L518.40 346.31 L516.39 346.47 L514.39 346.33 L512.38 346.40 L510.37 346.06 L508.37 346.19 L506.36 346.57 L504.35 346.11 L502.35 346.23 L500.34 346.21 L498.33 346.18 L496.33 346.47 L494.32 346.12 L492.32 346.13 L490.31 346.26 L488.30 346.21 L486.30 346.21 L484.29 346.47 L482.28 346.24 L480.28 346.70 L478.27 346.51 L476.26 346.42 L474.26 346.74 L472.25 346.50 L470.24 346.30 L468.24 346.31 L466.23 346.59 L464.22 346.09 L462.22 346.28 L460.21 346.51 L458.20 346.29 L456.20 346.35 L454.19 346.38 L452.19 346.48 L450.18 346.05 L448.17 346.30 L446.17 346.26 L444.16 346.22 L442.15 346.06 L440.15 346.73 L438.14 346.32 L436.13 346.23 L434.13 346.57 L432.12 346.47 L430.11 346.71 L428.11 346.61 L426.10 346.49 L424.09 346.68 L422.09 346.57 L420.08 346.12 L418.07 346.36 L416.07 346.39 L414.06 346.07 L412.06 346.35 L410.05 346.05 L408.04 346.30 L406.04 346.18 L404.03 346.70 L402.02 346.33 L400.02 346.22 L398.01 346.72 L396.00 346.10 L394.00 346.64 L391.99 346.42 L389.98 346.63 L387.98 346.40 L385.97 346.32 L383.96 346.71 L381.96 346.09 L379.95 346.46 L377.94 346.38 L375.94 346.33 L373.93 346.49 L371.93 346.55 L369.92 346.29 L367.91 346.36 L365.91 346.55 L363.90 346.25 L361.89 346.54 L359.89 346.74 L357.88 346.58 L355.87 346.72 L353.87 346.64 L351.86 346.22 L349.85 346.48 L347.85 346.12 L345.84 346.23 L343.83 346.71 L341.83 346.06 L339.82 346.09 L337.81 346.70 L335.81 346.12 L333.80 346.45 L331.80 346.42 L329.79 346.07 L327.78 346.58 L325.78 346.38 L323.77 346.09 L321.76 346.24 L319.76 346.42 L317.75 346.06 L315.74 346.18 L313.74 346.33 L311.73 346.67 L309.72 346.31 L307.72 346.43 L305.71 346.61 L303.70 346.71 L301.70 346.38 L299.69 346.66 L297.68 346.44 L295.68 346.28 L293.67 346.43 L291.67 346.57 L289.66 346.34 L287.65 346.46 L285.65 346.21 L283.64 346.38 L281.63 346.05 L279.63 346.08 L277.62 346.24 L275.61 346.58 L273.61 346.67 L271.87 346.40 L271.80 344.38 L271.69 342.35 L271.50 340.33 L271.44 338.31 L271.73 336.29 L271.65 334.26 L271.66 332.24 L271.69 330.22 L271.78 328.19 L271.38 326.17 L271.42 324.15 L271.94 322.13 L271.89 320.10 L271.87 318.08 L271.28 316.06 L271.29 314.03 L271.44 312.01 L271.55 309.99 L271.69 307.97 L271.32 305.94 L271.63 303.92 L271.30 301.90 L271.31 299.87 L271.72 297.85 L271.64 295.83 L271.69 293.81 L271.51 291.78 L271.58 289.76 L271.40 287.74 L271.49 285.71 L271.77 283.69 L271.84 281.67 L271.30 279.65 L271.33 277.62 L271.60 275.60" fill="none" stroke="#140f38" stroke-width="2.9" stroke-linejoin="round"/><path d="M507.60 689.16 L509.62 688.82 L511.63 689.08 L513.65 688.08 L515.66 688.46 L517.68 688.16 L519.69 689.16 L521.71 688.36 L523.72 688.88 L525.74 689.48 L527.75 688.29 L529.77 688.69 L531.78 689.04 L533.80 689.36 L535.82 688.47 L537.83 688.36 L539.85 687.87 L541.86 689.28 L543.88 687.84 L545.89 687.85 L547.91 688.72 L549.92 688.57 L551.94 688.93 L553.95 688.24 L555.97 689.10 L557.98 687.84 L560.00 688.08 L562.02 688.89 L564.03 687.85 L566.05 688.25 L568.06 689.00 L570.08 688.95 L572.09 688.21 L574.11 687.96 L576.12 688.34 L578.14 689.01 L580.15 688.36 L582.17 687.91 L584.18 688.98 L586.20 688.72 L588.22 689.35 L590.23 689.39 L592.25 689.34 L594.26 688.49 L596.28 689.15 L598.29 688.25 L600.31 688.27 L602.32 688.42 L604.34 689.38 L606.35 689.31 L608.37 688.15 L610.38 688.35 L612.40 688.36 L614.42 688.35 L616.43 688.41 L618.45 688.40 L620.46 688.05 L622.48 688.71 L624.49 689.13 L626.51 688.67 L628.52 689.21 L630.54 688.71 L632.55 688.02 L634.57 689.07 L636.58 689.29 L638.60 688.21 L640.62 687.74 L642.63 688.63 L644.65 688.68 L646.66 688.72 L648.68 689.44 L650.69 688.87 L652.71 689.15 L654.72 687.82 L656.74 688.68 L658.75 689.12 L660.77 687.85 L662.78 687.85 L664.80 689.03 L666.82 689.32 L668.83 687.85 L670.85 688.84 L672.86 687.96 L674.88 689.04 L676.89 688.87 L678.91 688.14 L680.92 688.10 L682.94 689.08 L684.95 688.64 L686.97 689.08 L688.98 688.41 L691.00 688.31 L693.02 689.44 L695.03 688.91 L697.05 688.59 L699.06 688.67 L701.08 689.00 L703.09 688.97 L705.11 689.35 L707.12 688.44 L709.14 689.19 L711.15 688.90 L713.17 689.24 L715.18 689.15 L717.20 689.20 L719.22 689.30 L721.23 689.42 L723.25 688.85 L725.26 688.64 L727.28 688.98 L729.29 689.14 L731.31 688.46 L733.32 688.46 L735.34 687.96 L737.35 689.03 L739.37 689.48 L741.38 688.38 L744.00 688.60 L743.93 690.62 L743.54 692.63 L743.77 694.65 L742.55 696.67 L744.19 698.68 L743.74 700.70 L744.09 702.71 L743.13 704.73 L742.90 706.75 L743.98 708.76 L744.19 710.78 L743.47 712.80 L743.25 714.81 L742.66 716.83 L744.23 718.84 L744.10 720.86 L743.97 722.88 L743.91 724.89 L743.88 726.91 L743.01 728.93 L743.23 730.94 L743.90 732.96 L743.97 734.98 L743.79 736.99 L743.99 739.01 L742.94 741.02 L743.74 743.04 L743.31 745.06 L742.83 747.07 L743.44 749.09 L743.83 751.11 L742.70 753.12 L742.65 755.14 L743.68 757.16 L743.31 759.17 L742.58 761.19 L743.43 763.20 L743.90 765.22 L744.21 767.24 L742.59 769.25 L742.86 771.27 L743.61 773.29 L743.35 775.30 L743.37 777.32 L743.81 779.33 L742.52 781.35 L743.12 783.37 L743.87 785.38 L743.40 788.28 L741.38 787.45 L739.37 787.63 L737.35 786.87 L735.34 787.02 L733.32 787.21 L731.31 788.02 L729.29 788.02 L727.28 787.72 L725.26 787.83 L723.25 786.74 L721.23 787.37 L719.22 787.15 L717.20 786.51 L715.18 787.82 L713.17 787.34 L711.15 788.03 L709.14 786.91 L707.12 788.30 L705.11 786.82 L703.09 786.78 L701.08 786.82 L699.06 788.15 L697.05 787.81 L695.03 787.01 L693.02 788.13 L691.00 787.44 L688.98 787.46 L686.97 786.58 L684.95 787.24 L682.94 786.76 L680.92 787.75 L678.91 786.88 L676.89 787.55 L674.88 786.65 L672.86 788.14 L670.85 786.81 L668.83 787.92 L666.82 787.32 L664.80 787.35 L662.78 788.02 L660.77 786.80 L658.75 787.74 L656.74 787.74 L654.72 788.16 L652.71 787.75 L650.69 787.46 L648.68 787.01 L646.66 787.65 L644.65 787.06 L642.63 788.11 L640.62 787.59 L638.60 787.47 L636.58 786.56 L634.57 786.81 L632.55 787.12 L630.54 788.28 L628.52 787.62 L626.51 787.02 L624.49 787.87 L622.48 787.28 L620.46 787.48 L618.45 788.28 L616.43 786.52 L614.42 786.86 L612.40 787.93 L610.38 787.19 L608.37 787.78 L606.35 787.62 L604.34 787.33 L602.32 787.76 L600.31 787.69 L598.29 787.59 L596.28 787.10 L594.26 787.84 L592.25 787.94 L590.23 786.98 L588.22 787.71 L586.20 786.60 L584.18 787.29 L582.17 787.00 L580.15 787.70 L578.14 786.81 L576.12 788.13 L574.11 788.05 L572.09 788.13 L570.08 787.08 L568.06 787.03 L566.05 787.98 L564.03 787.58 L562.02 786.79 L560.00 787.23 L557.98 788.14 L555.97 787.89 L553.95 788.02 L551.94 788.08 L549.92 787.57 L547.91 788.17 L545.89 786.64 L543.88 787.53 L541.86 787.38 L539.85 787.13 L537.83 786.92 L535.82 786.82 L533.80 787.61 L531.78 787.70 L529.77 787.56 L527.75 788.27 L525.74 787.58 L523.72 787.04 L521.71 786.53 L519.69 786.88 L517.68 787.11 L515.66 787.20 L513.65 788.27 L511.63 787.70 L509.62 787.68 L507.87 787.40 L506.89 785.38 L507.38 783.37 L507.62 781.35 L508.12 779.33 L508.19 777.32 L507.80 775.30 L506.99 773.29 L508.08 771.27 L508.33 769.25 L507.69 767.24 L507.33 765.22 L507.60 763.20 L506.96 761.19 L507.98 759.17 L508.48 757.16 L507.63 755.14 L507.99 753.12 L508.20 751.11 L507.05 749.09 L508.40 747.07 L507.83 745.06 L507.06 743.04 L506.85 741.02 L507.14 739.01 L507.74 736.99 L507.95 734.98 L507.29 732.96 L508.37 730.94 L507.35 728.93 L507.53 726.91 L506.92 724.89 L508.45 722.88 L506.94 720.86 L508.33 718.84 L507.68 716.83 L507.71 714.81 L507.71 712.80 L507.18 710.78 L508.34 708.76 L508.49 706.75 L508.17 704.73 L507.78 702.71 L506.92 700.70 L508.18 698.68 L507.22 696.67 L508.31 694.65 L507.13 692.63 L507.73 690.62 L507.60 688.60" fill="none" stroke="#140f38" stroke-opacity="0.35" stroke-width="3.6" stroke-linejoin="round"/><path d="M507.60 688.83 L509.62 688.38 L511.63 688.63 L513.65 688.30 L515.66 688.27 L517.68 688.38 L519.69 688.94 L521.71 688.91 L523.72 688.71 L525.74 688.47 L527.75 688.72 L529.77 688.77 L531.78 688.52 L533.80 688.66 L535.82 688.81 L537.83 688.26 L539.85 688.39 L541.86 688.58 L543.88 688.35 L545.89 688.52 L547.91 688.65 L549.92 688.37 L551.94 688.61 L553.95 688.43 L555.97 688.65 L557.98 688.48 L560.00 688.70 L562.02 688.28 L564.03 688.72 L566.05 688.35 L568.06 688.92 L570.08 688.67 L572.09 688.58 L574.11 688.54 L576.12 688.69 L578.14 688.73 L580.15 688.78 L582.17 688.78 L584.18 688.59 L586.20 688.95 L588.22 688.84 L590.23 688.85 L592.25 688.54 L594.26 688.55 L596.28 688.65 L598.29 688.88 L600.31 688.62 L602.32 688.62 L604.34 688.55 L606.35 688.88 L608.37 688.47 L610.38 688.29 L612.40 688.76 L614.42 688.88 L616.43 688.76 L618.45 688.67 L620.46 688.78 L622.48 688.46 L624.49 688.67 L626.51 688.30 L628.52 688.34 L630.54 688.56 L632.55 688.60 L634.57 688.53 L636.58 688.29 L638.60 688.74 L640.62 688.62 L642.63 688.42 L644.65 688.46 L646.66 688.53 L648.68 688.42 L650.69 688.30 L652.71 688.89 L654.72 688.93 L656.74 688.72 L658.75 688.86 L660.77 688.54 L662.78 688.81 L664.80 688.41 L666.82 688.77 L668.83 688.65 L670.85 688.88 L672.86 688.32 L674.88 688.80 L676.89 688.34 L678.91 688.63 L680.92 688.92 L682.94 688.25 L684.95 688.42 L686.97 688.46 L688.98 688.48 L691.00 688.29 L693.02 688.88 L695.03 688.82 L697.05 688.53 L699.06 688.50 L701.08 688.66 L703.09 688.28 L705.11 688.27 L707.12 688.88 L709.14 688.47 L711.15 688.60 L713.17 688.90 L715.18 688.93 L717.20 688.58 L719.22 688.39 L721.23 688.46 L723.25 688.90 L725.26 688.88 L727.28 688.39 L729.29 688.84 L731.31 688.50 L733.32 688.58 L735.34 688.37 L737.35 688.87 L739.37 688.95 L741.38 688.39 L743.31 688.60 L743.62 690.62 L743.13 692.63 L743.71 694.65 L743.68 696.67 L743.24 698.68 L743.53 700.70 L743.12 702.71 L743.14 704.73 L743.25 706.75 L743.66 708.76 L743.26 710.78 L743.09 712.80 L743.44 714.81 L743.69 716.83 L743.59 718.84 L743.53 720.86 L743.25 722.88 L743.61 724.89 L743.62 726.91 L743.59 728.93 L743.28 730.94 L743.20 732.96 L743.49 734.98 L743.29 736.99 L743.13 739.01 L743.34 741.02 L743.59 743.04 L743.54 745.06 L743.10 747.07 L743.28 749.09 L743.56 751.11 L743.30 753.12 L743.69 755.14 L743.06 757.16 L743.44 759.17 L743.38 761.19 L743.38 763.20 L743.72 765.22 L743.33 767.24 L743.55 769.25 L743.57 771.27 L743.19 773.29 L743.69 775.30 L743.55 777.32 L743.22 779.33 L743.58 781.35 L743.55 783.37 L743.37 785.38 L743.40 787.62 L741.38 787.12 L739.37 787.06 L737.35 787.73 L735.34 787.43 L733.32 787.22 L731.31 787.48 L729.29 787.10 L727.28 787.40 L725.26 787.62 L723.25 787.36 L721.23 787.30 L719.22 787.50 L717.20 787.29 L715.18 787.20 L713.17 787.39 L711.15 787.40 L709.14 787.16 L707.12 787.27 L705.11 787.39 L703.09 787.08 L701.08 787.63 L699.06 787.20 L697.05 787.63 L695.03 787.32 L693.02 787.59 L691.00 787.44 L688.98 787.21 L686.97 787.20 L684.95 787.20 L682.94 787.58 L680.92 787.41 L678.91 787.60 L676.89 787.34 L674.88 787.40 L672.86 787.73 L670.85 787.33 L668.83 787.25 L666.82 787.35 L664.80 787.14 L662.78 787.62 L660.77 787.64 L658.75 787.74 L656.74 787.40 L654.72 787.45 L652.71 787.44 L650.69 787.57 L648.68 787.19 L646.66 787.70 L644.65 787.11 L642.63 787.35 L640.62 787.37 L638.60 787.20 L636.58 787.58 L634.57 787.65 L632.55 787.53 L630.54 787.72 L628.52 787.53 L626.51 787.32 L624.49 787.38 L622.48 787.56 L620.46 787.34 L618.45 787.69 L616.43 787.18 L614.42 787.63 L612.40 787.57 L610.38 787.64 L608.37 787.27 L606.35 787.17 L604.34 787.20 L602.32 787.71 L600.31 787.46 L598.29 787.49 L596.28 787.60 L594.26 787.07 L592.25 787.72 L590.23 787.41 L588.22 787.22 L586.20 787.06 L584.18 787.65 L582.17 787.43 L580.15 787.23 L578.14 787.72 L576.12 787.58 L574.11 787.13 L572.09 787.65 L570.08 787.47 L568.06 787.54 L566.05 787.45 L564.03 787.70 L562.02 787.73 L560.00 787.05 L557.98 787.22 L555.97 787.24 L553.95 787.59 L551.94 787.57 L549.92 787.36 L547.91 787.58 L545.89 787.43 L543.88 787.10 L541.86 787.50 L539.85 787.51 L537.83 787.06 L535.82 787.32 L533.80 787.72 L531.78 787.47 L529.77 787.30 L527.75 787.71 L525.74 787.51 L523.72 787.26 L521.71 787.14 L519.69 787.34 L517.68 787.13 L515.66 787.43 L513.65 787.47 L511.63 787.16 L509.62 787.48 L507.80 787.40 L507.40 785.38 L507.49 783.37 L507.38 781.35 L507.63 779.33 L507.36 777.32 L507.39 775.30 L507.40 773.29 L507.58 771.27 L507.47 769.25 L507.56 767.24 L507.95 765.22 L507.73 763.20 L507.85 761.19 L507.39 759.17 L507.52 757.16 L507.30 755.14 L507.73 753.12 L507.50 751.11 L507.44 749.09 L507.26 747.07 L507.38 745.06 L507.43 743.04 L507.53 741.02 L507.90 739.01 L507.75 736.99 L507.44 734.98 L507.50 732.96 L507.36 730.94 L507.91 728.93 L507.50 726.91 L507.79 724.89 L507.76 722.88 L507.88 720.86 L507.26 718.84 L507.48 716.83 L507.52 714.81 L507.31 712.80 L507.87 710.78 L507.48 708.76 L507.79 706.75 L507.61 704.73 L507.29 702.71 L507.53 700.70 L507.42 698.68 L507.28 696.67 L507.36 694.65 L507.67 692.63 L507.27 690.62 L507.60 688.60" fill="none" stroke="#140f38" stroke-width="2.9" stroke-linejoin="round"/><path d="M45.60 767.26 L47.62 767.46 L49.63 767.68 L51.65 766.94 L53.66 767.97 L55.68 767.17 L57.69 768.01 L59.71 767.90 L61.73 766.96 L63.74 767.07 L65.76 767.20 L67.77 767.98 L69.79 767.43 L71.81 767.40 L73.82 768.26 L75.84 767.11 L77.85 767.23 L79.87 767.32 L81.88 767.09 L83.90 766.77 L85.92 766.74 L87.93 767.83 L89.95 767.72 L91.96 768.16 L93.98 768.46 L95.99 767.24 L98.01 767.91 L100.03 768.35 L102.04 767.09 L104.06 767.94 L106.07 767.90 L108.09 768.42 L110.11 768.26 L112.12 767.12 L114.14 767.84 L116.15 766.86 L118.17 767.47 L120.18 767.41 L122.20 766.81 L124.22 767.39 L126.23 767.29 L128.25 767.59 L130.26 767.20 L132.28 766.99 L134.29 767.42 L136.31 767.56 L138.33 767.00 L140.34 767.90 L142.36 767.13 L144.37 766.87 L146.39 767.32 L148.41 767.46 L150.42 766.97 L152.44 767.75 L154.45 767.96 L156.47 767.70 L158.48 767.96 L160.50 766.74 L162.52 767.40 L164.53 767.36 L166.55 766.81 L168.56 767.43 L170.58 766.80 L172.59 767.59 L174.61 767.75 L176.63 767.54 L178.64 767.29 L180.66 767.16 L182.67 766.74 L184.69 767.32 L186.71 768.31 L188.72 767.72 L190.74 767.17 L192.75 767.90 L194.77 767.03 L196.78 767.54 L198.80 767.81 L200.82 768.42 L202.83 767.35 L204.85 767.74 L206.86 768.40 L208.88 768.09 L210.89 767.83 L212.91 767.82 L214.93 767.44 L216.94 767.45 L218.96 767.20 L220.97 768.19 L222.99 768.28 L225.01 767.39 L227.02 768.34 L229.04 766.77 L231.05 766.94 L233.07 767.61 L235.08 767.26 L237.10 767.35 L239.12 768.46 L241.13 766.97 L243.15 767.05 L245.16 767.11 L247.18 767.92 L249.19 767.12 L251.21 766.70 L253.23 767.68 L255.24 767.41 L257.26 767.13 L259.27 767.59 L261.29 767.87 L263.31 767.69 L265.32 767.82 L267.34 767.71 L269.35 768.20 L271.37 768.44 L273.38 767.30 L275.68 767.60 L274.70 769.62 L275.74 771.63 L275.01 773.65 L275.05 775.67 L275.06 777.68 L274.56 779.70 L274.82 781.71 L276.01 783.73 L275.18 785.75 L275.42 787.76 L275.29 789.78 L275.63 791.80 L275.79 793.81 L274.95 795.83 L275.34 797.84 L275.87 799.86 L275.85 801.88 L275.72 803.89 L275.98 805.91 L275.38 807.93 L276.07 809.94 L276.19 811.96 L276.18 813.98 L276.12 815.99 L275.03 818.01 L276.10 820.02 L275.49 822.04 L274.91 824.06 L275.43 826.07 L276.01 828.09 L274.74 830.11 L274.73 832.12 L276.20 834.14 L275.84 836.16 L275.39 838.17 L274.87 840.19 L275.59 842.20 L275.01 844.22 L275.85 846.24 L275.01 848.25 L275.71 850.27 L275.70 852.29 L274.93 854.30 L274.78 856.32 L274.81 858.33 L275.28 860.35 L275.54 862.37 L275.03 864.38 L275.40 866.18 L273.38 865.80 L271.37 865.86 L269.35 867.07 L267.34 866.62 L265.32 866.10 L263.31 866.88 L261.29 866.97 L259.27 867.28 L257.26 866.25 L255.24 865.61 L253.23 865.55 L251.21 867.06 L249.19 866.06 L247.18 866.55 L245.16 866.16 L243.15 866.59 L241.13 865.62 L239.12 865.52 L237.10 867.21 L235.08 866.02 L233.07 867.09 L231.05 867.22 L229.04 866.79 L227.02 865.98 L225.01 865.51 L222.99 867.08 L220.97 866.71 L218.96 867.25 L216.94 866.32 L214.93 866.43 L212.91 866.63 L210.89 866.74 L208.88 865.86 L206.86 865.79 L204.85 866.79 L202.83 866.59 L200.82 866.19 L198.80 865.92 L196.78 865.53 L194.77 866.60 L192.75 866.05 L190.74 866.32 L188.72 865.86 L186.71 867.04 L184.69 866.98 L182.67 867.11 L180.66 865.62 L178.64 866.85 L176.63 866.42 L174.61 867.08 L172.59 866.72 L170.58 867.27 L168.56 866.28 L166.55 867.04 L164.53 866.17 L162.52 866.81 L160.50 866.89 L158.48 866.43 L156.47 866.64 L154.45 866.83 L152.44 867.21 L150.42 867.18 L148.41 865.69 L146.39 866.74 L144.37 867.16 L142.36 866.97 L140.34 866.43 L138.33 865.51 L136.31 866.94 L134.29 865.74 L132.28 866.43 L130.26 866.55 L128.25 865.85 L126.23 866.59 L124.22 867.20 L122.20 866.31 L120.18 866.12 L118.17 866.18 L116.15 866.80 L114.14 865.61 L112.12 865.74 L110.11 865.51 L108.09 866.50 L106.07 865.80 L104.06 866.00 L102.04 866.98 L100.03 867.25 L98.01 867.00 L95.99 867.09 L93.98 867.17 L91.96 866.65 L89.95 865.94 L87.93 866.74 L85.92 866.37 L83.90 867.28 L81.88 866.92 L79.87 865.57 L77.85 867.28 L75.84 866.35 L73.82 865.84 L71.81 865.87 L69.79 865.98 L67.77 866.58 L65.76 865.85 L63.74 865.81 L61.73 865.92 L59.71 865.53 L57.69 867.12 L55.68 865.59 L53.66 866.58 L51.65 866.03 L49.63 866.85 L47.62 865.66 L44.74 866.40 L45.74 864.38 L45.11 862.37 L45.40 860.35 L45.36 858.33 L45.88 856.32 L46.16 854.30 L45.36 852.29 L45.85 850.27 L45.34 848.25 L45.20 846.24 L46.33 844.22 L45.28 842.20 L44.87 840.19 L45.30 838.17 L46.03 836.16 L45.08 834.14 L46.04 832.12 L45.68 830.11 L45.92 828.09 L45.02 826.07 L44.89 824.06 L44.96 822.04 L45.33 820.02 L45.48 818.01 L44.72 815.99 L45.60 813.98 L45.43 811.96 L45.28 809.94 L45.67 807.93 L46.41 805.91 L45.07 803.89 L46.28 801.88 L45.28 799.86 L46.06 797.84 L44.90 795.83 L46.48 793.81 L45.47 791.80 L46.43 789.78 L45.10 787.76 L45.43 785.75 L45.97 783.73 L45.02 781.71 L45.19 779.70 L45.92 777.68 L46.41 775.67 L45.28 773.65 L45.03 771.63 L45.34 769.62 L45.60 767.60" fill="none" stroke="#140f38" stroke-opacity="0.35" stroke-width="3.6" stroke-linejoin="round"/><path d="M45.60 767.94 L47.62 767.35 L49.63 767.69 L51.65 767.51 L53.66 767.70 L55.68 767.40 L57.69 767.68 L59.71 767.87 L61.73 767.85 L63.74 767.69 L65.76 767.60 L67.77 767.65 L69.79 767.33 L71.81 767.84 L73.82 767.73 L75.84 767.57 L77.85 767.72 L79.87 767.54 L81.88 767.52 L83.90 767.41 L85.92 767.67 L87.93 767.65 L89.95 767.61 L91.96 767.27 L93.98 767.69 L95.99 767.56 L98.01 767.67 L100.03 767.67 L102.04 767.90 L104.06 767.36 L106.07 767.58 L108.09 767.95 L110.11 767.77 L112.12 767.47 L114.14 767.77 L116.15 767.94 L118.17 767.53 L120.18 767.86 L122.20 767.34 L124.22 767.94 L126.23 767.59 L128.25 767.41 L130.26 767.84 L132.28 767.70 L134.29 767.91 L136.31 767.83 L138.33 767.81 L140.34 767.61 L142.36 767.95 L144.37 767.30 L146.39 767.86 L148.41 767.75 L150.42 767.43 L152.44 767.82 L154.45 767.57 L156.47 767.63 L158.48 767.86 L160.50 767.39 L162.52 767.45 L164.53 767.70 L166.55 767.30 L168.56 767.64 L170.58 767.80 L172.59 767.59 L174.61 767.42 L176.63 767.81 L178.64 767.85 L180.66 767.79 L182.67 767.63 L184.69 767.88 L186.71 767.81 L188.72 767.36 L190.74 767.51 L192.75 767.32 L194.77 767.28 L196.78 767.49 L198.80 767.86 L200.82 767.83 L202.83 767.33 L204.85 767.38 L206.86 767.52 L208.88 767.84 L210.89 767.68 L212.91 767.88 L214.93 767.30 L216.94 767.94 L218.96 767.39 L220.97 767.69 L222.99 767.86 L225.01 767.76 L227.02 767.39 L229.04 767.72 L231.05 767.55 L233.07 767.26 L235.08 767.49 L237.10 767.47 L239.12 767.69 L241.13 767.44 L243.15 767.67 L245.16 767.74 L247.18 767.38 L249.19 767.34 L251.21 767.74 L253.23 767.58 L255.24 767.34 L257.26 767.33 L259.27 767.91 L261.29 767.68 L263.31 767.50 L265.32 767.39 L267.34 767.95 L269.35 767.73 L271.37 767.77 L273.38 767.50 L275.53 767.60 L275.46 769.62 L275.65 771.63 L275.31 773.65 L275.45 775.67 L275.18 777.68 L275.46 779.70 L275.43 781.71 L275.40 783.73 L275.09 785.75 L275.51 787.76 L275.26 789.78 L275.59 791.80 L275.34 793.81 L275.55 795.83 L275.14 797.84 L275.55 799.86 L275.15 801.88 L275.28 803.89 L275.43 805.91 L275.10 807.93 L275.48 809.94 L275.23 811.96 L275.33 813.98 L275.44 815.99 L275.71 818.01 L275.46 820.02 L275.55 822.04 L275.44 824.06 L275.08 826.07 L275.54 828.09 L275.26 830.11 L275.28 832.12 L275.58 834.14 L275.46 836.16 L275.66 838.17 L275.12 840.19 L275.57 842.20 L275.46 844.22 L275.51 846.24 L275.18 848.25 L275.15 850.27 L275.34 852.29 L275.37 854.30 L275.68 856.32 L275.12 858.33 L275.69 860.35 L275.50 862.37 L275.49 864.38 L275.40 866.24 L273.38 866.28 L271.37 866.51 L269.35 866.12 L267.34 866.09 L265.32 866.73 L263.31 866.31 L261.29 866.42 L259.27 866.50 L257.26 866.42 L255.24 866.53 L253.23 866.28 L251.21 866.33 L249.19 866.07 L247.18 866.07 L245.16 866.06 L243.15 866.47 L241.13 866.17 L239.12 866.30 L237.10 866.26 L235.08 866.05 L233.07 866.70 L231.05 866.43 L229.04 866.47 L227.02 866.29 L225.01 866.60 L222.99 866.06 L220.97 866.60 L218.96 866.49 L216.94 866.65 L214.93 866.47 L212.91 866.23 L210.89 866.69 L208.88 866.63 L206.86 866.30 L204.85 866.31 L202.83 866.23 L200.82 866.57 L198.80 866.18 L196.78 866.24 L194.77 866.21 L192.75 866.67 L190.74 866.42 L188.72 866.74 L186.71 866.15 L184.69 866.09 L182.67 866.12 L180.66 866.73 L178.64 866.50 L176.63 866.37 L174.61 866.38 L172.59 866.67 L170.58 866.20 L168.56 866.54 L166.55 866.39 L164.53 866.66 L162.52 866.35 L160.50 866.66 L158.48 866.69 L156.47 866.39 L154.45 866.54 L152.44 866.21 L150.42 866.58 L148.41 866.46 L146.39 866.71 L144.37 866.60 L142.36 866.43 L140.34 866.36 L138.33 866.43 L136.31 866.15 L134.29 866.68 L132.28 866.15 L130.26 866.64 L128.25 866.07 L126.23 866.38 L124.22 866.47 L122.20 866.32 L120.18 866.15 L118.17 866.08 L116.15 866.46 L114.14 866.74 L112.12 866.64 L110.11 866.18 L108.09 866.24 L106.07 866.25 L104.06 866.64 L102.04 866.38 L100.03 866.73 L98.01 866.67 L95.99 866.54 L93.98 866.07 L91.96 866.30 L89.95 866.16 L87.93 866.72 L85.92 866.46 L83.90 866.70 L81.88 866.57 L79.87 866.67 L77.85 866.11 L75.84 866.52 L73.82 866.41 L71.81 866.29 L69.79 866.13 L67.77 866.09 L65.76 866.35 L63.74 866.40 L61.73 866.12 L59.71 866.47 L57.69 866.54 L55.68 866.23 L53.66 866.57 L51.65 866.49 L49.63 866.45 L47.62 866.42 L45.50 866.40 L45.55 864.38 L45.57 862.37 L45.28 860.35 L45.83 858.33 L45.29 856.32 L45.62 854.30 L45.63 852.29 L45.53 850.27 L45.41 848.25 L45.32 846.24 L45.51 844.22 L45.47 842.20 L45.59 840.19 L45.41 838.17 L45.77 836.16 L45.59 834.14 L45.26 832.12 L45.53 830.11 L45.93 828.09 L45.25 826.07 L45.67 824.06 L45.92 822.04 L45.51 820.02 L45.67 818.01 L45.51 815.99 L45.46 813.98 L45.68 811.96 L45.66 809.94 L45.47 807.93 L45.60 805.91 L45.61 803.89 L45.78 801.88 L45.29 799.86 L45.31 797.84 L45.43 795.83 L45.44 793.81 L45.81 791.80 L45.55 789.78 L45.85 787.76 L45.53 785.75 L45.45 783.73 L45.73 781.71 L45.31 779.70 L45.94 777.68 L45.83 775.67 L45.48 773.65 L45.47 771.63 L45.82 769.62 L45.60 767.60" fill="none" stroke="#140f38" stroke-width="2.9" stroke-linejoin="round"/><path d="M312.60 811.12 L314.62 810.86 L316.63 809.80 L318.65 811.07 L320.67 809.79 L322.68 810.82 L324.70 810.69 L326.71 811.37 L328.73 810.85 L330.75 809.74 L332.76 811.38 L334.78 811.05 L336.80 810.74 L338.81 809.71 L340.83 811.03 L342.85 810.45 L344.86 810.92 L346.88 811.47 L348.89 811.35 L350.91 809.83 L352.93 811.11 L354.94 810.49 L356.96 811.05 L358.98 810.38 L360.99 810.51 L363.01 810.49 L365.03 809.91 L367.04 810.28 L369.06 811.02 L371.07 809.83 L373.09 809.91 L375.11 811.20 L377.12 810.90 L379.14 810.69 L381.16 809.90 L383.17 809.91 L385.19 810.26 L387.21 811.42 L389.22 810.71 L391.24 811.36 L393.25 810.08 L395.27 810.45 L397.29 810.67 L399.30 811.21 L401.32 809.92 L403.34 811.27 L405.35 810.55 L407.37 809.76 L409.39 810.48 L411.40 810.38 L413.42 810.91 L415.43 811.37 L417.45 810.59 L419.47 810.94 L421.48 810.40 L423.50 811.10 L425.52 809.89 L427.53 811.04 L429.55 810.00 L431.57 810.75 L433.58 810.06 L435.60 810.32 L437.61 809.99 L439.63 810.33 L441.65 810.76 L443.66 810.64 L445.68 810.40 L447.70 810.73 L449.71 811.22 L451.73 810.34 L453.75 810.75 L455.76 810.56 L457.78 811.47 L459.79 810.29 L461.81 810.96 L463.83 810.12 L465.84 810.17 L467.86 811.01 L469.88 810.73 L471.89 810.16 L473.91 809.82 L475.93 811.18 L477.94 810.38 L479.96 810.99 L481.97 810.48 L483.99 810.81 L486.01 810.71 L488.02 811.46 L490.04 811.34 L492.06 810.52 L494.07 810.58 L496.09 810.12 L498.11 811.06 L500.12 809.88 L502.14 810.25 L504.15 811.23 L506.17 809.76 L508.19 810.96 L510.20 810.72 L512.22 810.69 L514.24 810.30 L516.25 809.97 L518.27 811.41 L520.29 811.08 L522.30 811.15 L524.32 809.88 L526.33 811.11 L528.35 810.09 L530.37 810.06 L532.38 810.66 L534.20 810.60 L535.08 812.62 L533.92 814.63 L534.25 816.65 L533.68 818.67 L533.64 820.68 L534.06 822.70 L534.64 824.71 L533.59 826.73 L534.01 828.75 L534.78 830.76 L533.76 832.78 L533.99 834.80 L534.82 836.81 L534.85 838.83 L535.26 840.84 L534.33 842.86 L534.84 844.88 L534.77 846.89 L534.84 848.91 L535.06 850.93 L534.43 852.94 L534.81 854.96 L534.79 856.98 L534.80 858.99 L534.38 861.01 L533.73 863.02 L535.01 865.04 L533.75 867.06 L533.76 869.07 L534.20 871.09 L534.32 873.11 L533.98 875.12 L534.34 877.14 L534.11 879.16 L533.65 881.17 L533.90 883.19 L534.83 885.20 L535.20 887.22 L533.61 889.24 L534.65 891.25 L533.88 893.27 L534.88 895.29 L534.48 897.30 L534.63 899.32 L533.99 901.33 L533.60 903.35 L534.39 905.37 L534.28 907.38 L534.40 909.67 L532.38 909.88 L530.37 908.59 L528.35 910.10 L526.33 908.61 L524.32 909.12 L522.30 910.17 L520.29 908.68 L518.27 910.12 L516.25 909.28 L514.24 910.08 L512.22 908.52 L510.20 909.74 L508.19 908.73 L506.17 910.19 L504.15 909.10 L502.14 910.18 L500.12 910.25 L498.11 909.27 L496.09 908.53 L494.07 909.07 L492.06 908.76 L490.04 908.89 L488.02 909.36 L486.01 910.16 L483.99 909.35 L481.97 909.97 L479.96 909.35 L477.94 909.66 L475.93 909.40 L473.91 909.94 L471.89 909.03 L469.88 909.55 L467.86 909.43 L465.84 910.16 L463.83 909.42 L461.81 909.30 L459.79 908.55 L457.78 909.29 L455.76 910.06 L453.75 909.76 L451.73 909.70 L449.71 909.04 L447.70 908.61 L445.68 908.54 L443.66 908.59 L441.65 908.63 L439.63 908.75 L437.61 908.62 L435.60 910.26 L433.58 909.42 L431.57 909.24 L429.55 909.07 L427.53 909.20 L425.52 909.20 L423.50 908.62 L421.48 910.14 L419.47 909.37 L417.45 908.57 L415.43 910.24 L413.42 910.10 L411.40 908.74 L409.39 908.58 L407.37 910.26 L405.35 910.24 L403.34 908.81 L401.32 909.06 L399.30 909.36 L397.29 909.26 L395.27 908.94 L393.25 908.85 L391.24 910.30 L389.22 910.18 L387.21 908.87 L385.19 908.54 L383.17 908.80 L381.16 909.57 L379.14 909.70 L377.12 909.68 L375.11 910.27 L373.09 908.91 L371.07 909.83 L369.06 909.25 L367.04 909.35 L365.03 909.70 L363.01 909.09 L360.99 909.48 L358.98 909.88 L356.96 908.71 L354.94 909.98 L352.93 910.03 L350.91 909.84 L348.89 909.44 L346.88 908.89 L344.86 909.70 L342.85 909.87 L340.83 909.12 L338.81 909.83 L336.80 909.36 L334.78 909.84 L332.76 908.72 L330.75 909.97 L328.73 909.88 L326.71 909.76 L324.70 909.71 L322.68 908.99 L320.67 909.09 L318.65 908.88 L316.63 909.33 L314.62 910.16 L313.07 909.40 L312.14 907.38 L312.09 905.37 L312.45 903.35 L313.48 901.33 L312.37 899.32 L312.34 897.30 L313.34 895.29 L313.48 893.27 L312.40 891.25 L311.94 889.24 L313.12 887.22 L313.11 885.20 L312.31 883.19 L313.12 881.17 L312.38 879.16 L312.22 877.14 L312.77 875.12 L313.03 873.11 L312.56 871.09 L313.17 869.07 L311.72 867.06 L312.60 865.04 L312.38 863.02 L311.82 861.01 L313.35 858.99 L311.96 856.98 L312.07 854.96 L313.28 852.94 L313.43 850.93 L313.38 848.91 L312.32 846.89 L313.38 844.88 L311.96 842.86 L312.99 840.84 L313.40 838.83 L312.05 836.81 L311.94 834.80 L312.92 832.78 L313.29 830.76 L313.01 828.75 L313.41 826.73 L312.52 824.71 L312.37 822.70 L311.92 820.68 L312.19 818.67 L313.39 816.65 L311.83 814.63 L312.03 812.62 L312.60 810.60" fill="none" stroke="#140f38" stroke-opacity="0.35" stroke-width="3.6" stroke-linejoin="round"/><path d="M312.60 810.49 L314.62 810.28 L316.63 810.46 L318.65 810.38 L320.67 810.34 L322.68 810.62 L324.70 810.63 L326.71 810.65 L328.73 810.78 L330.75 810.62 L332.76 810.91 L334.78 810.31 L336.80 810.41 L338.81 810.30 L340.83 810.47 L342.85 810.78 L344.86 810.90 L346.88 810.60 L348.89 810.36 L350.91 810.48 L352.93 810.65 L354.94 810.46 L356.96 810.80 L358.98 810.93 L360.99 810.57 L363.01 810.67 L365.03 810.84 L367.04 810.58 L369.06 810.38 L371.07 810.91 L373.09 810.93 L375.11 810.27 L377.12 810.78 L379.14 810.53 L381.16 810.29 L383.17 810.36 L385.19 810.37 L387.21 810.77 L389.22 810.40 L391.24 810.26 L393.25 810.40 L395.27 810.81 L397.29 810.60 L399.30 810.71 L401.32 810.58 L403.34 810.38 L405.35 810.26 L407.37 810.46 L409.39 810.28 L411.40 810.43 L413.42 810.68 L415.43 810.51 L417.45 810.58 L419.47 810.69 L421.48 810.47 L423.50 810.50 L425.52 810.87 L427.53 810.66 L429.55 810.54 L431.57 810.63 L433.58 810.57 L435.60 810.48 L437.61 810.89 L439.63 810.41 L441.65 810.91 L443.66 810.85 L445.68 810.87 L447.70 810.36 L449.71 810.61 L451.73 810.94 L453.75 810.45 L455.76 810.37 L457.78 810.76 L459.79 810.41 L461.81 810.66 L463.83 810.36 L465.84 810.91 L467.86 810.45 L469.88 810.32 L471.89 810.73 L473.91 810.49 L475.93 810.64 L477.94 810.60 L479.96 810.90 L481.97 810.61 L483.99 810.52 L486.01 810.25 L488.02 810.60 L490.04 810.44 L492.06 810.65 L494.07 810.69 L496.09 810.57 L498.11 810.31 L500.12 810.60 L502.14 810.59 L504.15 810.70 L506.17 810.93 L508.19 810.45 L510.20 810.56 L512.22 810.31 L514.24 810.81 L516.25 810.41 L518.27 810.83 L520.29 810.81 L522.30 810.43 L524.32 810.88 L526.33 810.60 L528.35 810.55 L530.37 810.64 L532.38 810.91 L534.41 810.60 L534.41 812.62 L534.55 814.63 L534.16 816.65 L534.40 818.67 L534.51 820.68 L534.61 822.70 L534.60 824.71 L534.17 826.73 L534.19 828.75 L534.06 830.76 L534.11 832.78 L534.27 834.80 L534.19 836.81 L534.25 838.83 L534.18 840.84 L534.19 842.86 L534.63 844.88 L534.18 846.89 L534.54 848.91 L534.58 850.93 L534.11 852.94 L534.73 854.96 L534.39 856.98 L534.51 858.99 L534.20 861.01 L534.32 863.02 L534.11 865.04 L534.10 867.06 L534.30 869.07 L534.70 871.09 L534.28 873.11 L534.67 875.12 L534.06 877.14 L534.14 879.16 L534.53 881.17 L534.62 883.19 L534.26 885.20 L534.22 887.22 L534.06 889.24 L534.31 891.25 L534.66 893.27 L534.24 895.29 L534.71 897.30 L534.14 899.32 L534.21 901.33 L534.20 903.35 L534.14 905.37 L534.35 907.38 L534.40 909.09 L532.38 909.30 L530.37 909.41 L528.35 909.48 L526.33 909.50 L524.32 909.73 L522.30 909.64 L520.29 909.19 L518.27 909.59 L516.25 909.29 L514.24 909.21 L512.22 909.26 L510.20 909.39 L508.19 909.53 L506.17 909.56 L504.15 909.62 L502.14 909.30 L500.12 909.27 L498.11 909.09 L496.09 909.52 L494.07 909.10 L492.06 909.11 L490.04 909.55 L488.02 909.08 L486.01 909.32 L483.99 909.08 L481.97 909.21 L479.96 909.52 L477.94 909.55 L475.93 909.38 L473.91 909.41 L471.89 909.73 L469.88 909.15 L467.86 909.38 L465.84 909.42 L463.83 909.23 L461.81 909.58 L459.79 909.61 L457.78 909.34 L455.76 909.58 L453.75 909.52 L451.73 909.70 L449.71 909.71 L447.70 909.50 L445.68 909.38 L443.66 909.09 L441.65 909.30 L439.63 909.46 L437.61 909.47 L435.60 909.59 L433.58 909.42 L431.57 909.08 L429.55 909.66 L427.53 909.45 L425.52 909.27 L423.50 909.22 L421.48 909.36 L419.47 909.30 L417.45 909.09 L415.43 909.12 L413.42 909.57 L411.40 909.37 L409.39 909.05 L407.37 909.38 L405.35 909.62 L403.34 909.21 L401.32 909.71 L399.30 909.64 L397.29 909.36 L395.27 909.56 L393.25 909.25 L391.24 909.24 L389.22 909.53 L387.21 909.21 L385.19 909.30 L383.17 909.26 L381.16 909.43 L379.14 909.45 L377.12 909.68 L375.11 909.42 L373.09 909.08 L371.07 909.13 L369.06 909.71 L367.04 909.70 L365.03 909.56 L363.01 909.26 L360.99 909.44 L358.98 909.66 L356.96 909.45 L354.94 909.35 L352.93 909.23 L350.91 909.47 L348.89 909.30 L346.88 909.27 L344.86 909.32 L342.85 909.72 L340.83 909.25 L338.81 909.66 L336.80 909.71 L334.78 909.42 L332.76 909.74 L330.75 909.70 L328.73 909.48 L326.71 909.42 L324.70 909.68 L322.68 909.08 L320.67 909.15 L318.65 909.41 L316.63 909.34 L314.62 909.53 L312.94 909.40 L312.33 907.38 L312.46 905.37 L312.40 903.35 L312.86 901.33 L312.61 899.32 L312.54 897.30 L312.53 895.29 L312.87 893.27 L312.43 891.25 L312.80 889.24 L312.75 887.22 L312.56 885.20 L312.51 883.19 L312.56 881.17 L312.57 879.16 L312.47 877.14 L312.69 875.12 L312.54 873.11 L312.46 871.09 L312.79 869.07 L312.57 867.06 L312.58 865.04 L312.87 863.02 L312.57 861.01 L312.51 858.99 L312.88 856.98 L312.93 854.96 L312.80 852.94 L312.53 850.93 L312.72 848.91 L312.77 846.89 L312.46 844.88 L312.76 842.86 L312.91 840.84 L312.71 838.83 L312.72 836.81 L312.55 834.80 L312.71 832.78 L312.41 830.76 L312.79 828.75 L312.63 826.73 L312.94 824.71 L312.49 822.70 L312.75 820.68 L312.26 818.67 L312.54 816.65 L312.79 814.63 L312.43 812.62 L312.60 810.60" fill="none" stroke="#140f38" stroke-width="2.9" stroke-linejoin="round"/><path d="M380.88 346.87 L379.84 348.70 L378.17 349.87 L376.05 350.54 L375.45 352.85 L373.20 353.39 L372.66 355.76 L370.62 356.52 L368.89 357.62 L367.41 358.97 L366.42 360.87 L364.74 362.01 L363.13 363.24 L361.61 364.56 L360.16 365.95 L358.87 367.52 L357.76 369.27 L355.79 370.12 L354.48 371.66 L353.03 373.05 L351.08 373.91 L350.54 376.28 L348.36 376.90 L347.39 378.80 L345.48 379.71 L343.77 380.82 L343.04 382.99 L341.25 384.02 L339.82 385.44 L338.39 386.85 L337.28 388.61 L335.31 389.44 L333.54 390.51 L332.33 392.15 L331.27 393.96 L329.23 394.73 L328.18 396.55 L327.01 398.25 L325.04 399.08 L323.73 400.63 L322.18 401.92 L320.21 402.76 L319.20 404.62 L317.31 405.55 L316.50 407.62 L314.59 408.52 L313.86 410.70 L312.15 411.81 L310.25 412.72 L308.78 414.10 L307.16 415.31 L306.18 417.21 L304.83 418.71 L303.27 419.98 L301.60 421.15 L300.69 423.12 L298.84 424.09 L297.06 425.13 L296.15 427.10 L294.50 428.28 L292.42 429.00 L290.88 430.30 L290.16 432.48 L288.77 433.93 L287.37 435.38 L285.93 436.79 L283.69 437.33 L282.28 438.77 L281.33 440.70 L279.61 441.81 L277.92 442.95 L277.18 445.10 L274.84 445.55 L273.33 446.88 L272.57 449.01 L270.56 449.81 L269.10 451.18 L268.02 452.98 L265.96 453.72 L265.21 455.87 L263.46 456.94 L262.17 458.50 L260.56 459.73 L258.68 460.67 L257.48 462.33 L255.97 463.65 L254.09 464.59 L253.45 466.85 L251.98 468.23 L250.08 469.14 L249.12 471.06 L246.76 471.48 L245.97 473.59 L244.40 474.84 L242.94 476.23 L241.03 477.14 L239.47 478.41 L238.26 480.06 L237.34 482.03 L235.67 483.19 L233.82 484.15 L232.88 486.10 L230.69 486.69 L229.23 488.08 L228.46 490.21 L226.84 491.42 L225.52 492.95 L223.52 493.75 L222.78 495.91 L220.60 496.53 L219.83 498.64 L217.51 499.11 L216.36 500.83 L214.85 502.15 L213.91 504.10 L212.00 505.00" fill="none" stroke="#140f38" stroke-opacity="0.35" stroke-width="3.4" stroke-linecap="round"/><path d="M381.19 347.20 L379.59 348.44 L377.86 349.54 L376.55 351.08 L374.97 352.34 L373.83 354.06 L372.35 355.42 L370.91 356.83 L369.16 357.90 L367.91 359.51 L366.40 360.84 L364.77 362.04 L363.29 363.40 L361.97 364.94 L360.44 366.25 L359.04 367.70 L357.46 368.96 L356.08 370.42 L354.61 371.79 L353.18 373.21 L351.69 374.57 L350.24 375.96 L348.87 377.44 L347.28 378.68 L345.69 379.93 L344.36 381.45 L342.95 382.89 L341.18 383.94 L339.86 385.48 L338.38 386.84 L336.99 388.30 L335.28 389.42 L333.87 390.85 L332.45 392.29 L330.97 393.64 L329.49 395.00 L328.10 396.46 L326.66 397.87 L325.20 399.26 L323.69 400.58 L322.23 401.97 L320.74 403.32 L319.26 404.69 L317.69 405.95 L316.18 407.28 L314.98 408.95 L313.60 410.41 L312.01 411.66 L310.65 413.15 L308.87 414.19 L307.47 415.64 L306.14 417.16 L304.71 418.58 L302.96 419.66 L301.51 421.04 L300.10 422.48 L298.63 423.86 L297.13 425.21 L295.78 426.71 L294.34 428.11 L292.80 429.41 L291.20 430.64 L289.69 431.97 L288.25 433.37 L286.81 434.78 L285.65 436.49 L284.11 437.79 L282.35 438.85 L281.05 440.41 L279.59 441.79 L278.21 443.26 L276.51 444.39 L275.18 445.91 L273.52 447.08 L272.43 448.86 L270.58 449.83 L269.51 451.63 L267.99 452.95 L266.42 454.21 L264.85 455.48 L263.59 457.08 L261.94 458.26 L260.32 459.47 L259.05 461.06 L257.45 462.29 L256.05 463.74 L254.58 465.12 L253.28 466.67 L251.69 467.92 L250.04 469.10 L248.67 470.58 L247.39 472.15 L245.82 473.42 L244.31 474.75 L242.93 476.22 L241.36 477.49 L239.87 478.84 L238.65 480.48 L237.10 481.77 L235.45 482.95 L234.16 484.52 L232.75 485.95 L231.00 487.02 L229.70 488.59 L227.98 489.69 L226.67 491.24 L225.39 492.81 L223.70 493.95 L222.38 495.49 L220.69 496.62 L219.26 498.03 L217.77 499.39 L216.59 501.07 L215.13 502.46 L213.35 503.50 L212.00 505.00" fill="none" stroke="#140f38" stroke-width="2.8" stroke-linecap="round"/><path d="M209.32 496.27 L208.58 498.34 L208.19 500.51 L207.33 502.54 L206.20 504.49 L204.81 506.35 L205.13 508.74 L204.57 510.87 L203.66 513.36 L205.43 511.94 L207.56 512.24 L209.53 511.79 L211.61 511.89 L213.31 510.08 L215.45 510.48 L217.38 509.79 L219.50 510.07 L221.09 509.43 L220.22 507.46 L218.21 506.60 L217.17 504.81 L216.31 502.83 L214.07 502.19 L212.72 500.70 L212.05 498.54 L210.37 497.36 L208.77 496.10Z" fill="#140f38" fill-opacity="0.4" stroke="#140f38" stroke-opacity="0.35" stroke-width="2.6" stroke-linejoin="round"/><path d="M209.06 496.19 L208.33 498.26 L207.64 500.34 L206.96 502.42 L205.93 504.40 L205.38 506.52 L204.54 508.56 L204.09 510.72 L203.57 512.93 L205.52 512.35 L207.54 512.17 L209.49 511.61 L211.41 510.90 L213.45 510.79 L215.42 510.30 L217.42 509.99 L219.33 509.25 L221.14 509.38 L220.22 507.47 L218.51 506.32 L217.09 504.89 L215.60 503.52 L214.42 501.86 L213.18 500.25 L211.41 499.16 L210.17 497.55 L208.77 496.10Z" fill="#140f38" stroke="#140f38" stroke-width="1.5" stroke-linejoin="round"/><path d="M506.00 738.00 L504.32 736.82 L502.35 736.33 L500.29 736.02 L498.42 735.30 L496.90 733.72 L494.65 733.88 L493.30 731.94 L490.93 732.37 L489.18 731.35 L487.51 730.15 L485.90 728.81 L483.91 728.35 L482.14 727.38 L480.30 726.56 L478.43 725.83 L476.16 726.03 L474.80 724.10 L472.53 724.31 L470.69 723.50 L468.76 722.89 L466.91 722.11 L465.59 720.08 L463.44 720.02 L461.40 719.66 L459.53 718.93 L458.19 716.96 L456.18 716.53 L454.54 715.28 L452.14 715.79 L450.34 714.89 L448.60 713.84 L446.69 713.19 L444.79 712.52 L443.00 711.60 L441.43 710.16 L439.29 710.07 L437.44 709.28 L435.82 707.95 L433.87 707.39 L431.88 706.94 L430.30 705.53 L428.42 704.83 L426.49 704.22 L424.70 703.30 L422.58 703.15 L421.09 701.51 L418.98 701.35 L417.22 700.35 L415.17 700.04 L413.88 697.96 L411.84 697.61 L409.87 697.11 L408.12 696.10 L406.52 694.72 L404.16 695.12 L402.47 693.96 L400.83 692.69 L398.77 692.40 L397.14 691.12 L395.41 690.03 L393.02 690.52 L391.33 689.37 L389.49 688.57 L387.93 687.11 L386.10 686.27 L384.20 685.60 L382.49 684.48 L380.18 684.78 L378.46 683.68 L376.91 682.22 L375.00 681.56 L372.75 681.73 L371.44 679.66 L369.45 679.23 L367.68 678.25 L365.51 678.20 L363.82 677.06 L362.19 675.75 L360.31 675.05 L358.26 674.73 L356.61 673.48 L354.83 672.53 L352.88 671.97 L350.92 671.45 L349.26 670.22 L346.90 670.63 L345.22 669.46 L343.47 668.43 L341.35 668.28 L339.91 666.53 L337.61 666.80 L336.12 665.18 L334.06 664.90 L332.24 664.05 L330.57 662.84 L328.46 662.66 L326.77 661.50 L325.18 660.11 L323.42 659.13 L321.11 659.40 L319.33 658.46 L317.69 657.19 L315.53 657.14 L314.09 655.38 L311.84 655.55 L310.21 654.23 L308.23 653.76 L306.17 653.47 L304.32 652.68 L302.48 651.89 L300.83 650.62 L298.95 649.91 L297.56 648.07 L295.49 647.80 L293.28 647.85 L291.84 646.10 L289.69 646.03 L288.00 644.87 L286.30 643.73 L284.54 642.74 L282.74 641.83 L280.57 641.80 L278.66 641.16 L276.86 640.26 L274.96 639.59 L273.38 638.17 L271.36 637.79 L269.65 636.67 L267.47 636.67 L266.02 634.95 L264.29 633.89 L261.96 634.23 L260.37 632.83 L258.24 632.71 L256.31 632.10 L254.70 630.76 L252.71 630.31 L251.21 628.71 L249.26 628.16 L247.48 627.22 L245.82 626.00 L243.40 626.54 L241.57 625.70 L239.69 625.00 L238.11 623.59 L236.49 622.26 L234.55 621.68 L232.62 621.09 L230.97 619.84 L228.81 619.77 L226.80 619.36 L225.29 617.79 L223.05 617.91 L221.34 616.82 L219.36 616.32 L217.60 615.34 L215.69 614.69 L214.14 613.22 L212.03 613.02 L210.49 611.53 L208.78 610.42 L206.63 610.33 L204.64 609.87 L203.14 608.27 L201.33 607.40 L199.58 606.38 L197.52 606.08 L195.69 605.25 L194.02 604.04 L192.06 603.53 L190.40 602.30 L188.12 602.52 L186.58 601.02 L184.64 600.44 L182.69 599.89 L180.56 599.77 L179.00 598.30 L177.02 597.82 L175.38 596.53 L173.48 595.88 L171.63 595.09 L169.50 594.96 L167.70 594.07 L166.15 592.58 L164.35 591.68 L162.70 590.44 L160.73 589.94 L158.56 589.89 L156.82 588.85 L155.00 588.00" fill="none" stroke="#140f38" stroke-opacity="0.35" stroke-width="3.4" stroke-linecap="round"/><path d="M506.00 738.00 L504.22 737.04 L502.28 736.48 L500.56 735.40 L498.61 734.85 L496.74 734.11 L494.91 733.27 L493.03 732.55 L491.34 731.41 L489.27 731.15 L487.50 730.16 L485.58 729.55 L483.87 728.43 L481.90 727.93 L480.05 727.14 L478.27 726.20 L476.47 725.31 L474.66 724.43 L472.73 723.82 L470.85 723.11 L469.02 722.28 L467.30 721.21 L465.29 720.79 L463.40 720.11 L461.75 718.84 L459.81 718.27 L457.88 717.68 L456.04 716.89 L454.37 715.68 L452.49 714.97 L450.48 714.56 L448.77 713.43 L446.82 712.89 L445.02 711.98 L443.21 711.10 L441.24 710.62 L439.60 709.34 L437.61 708.88 L435.72 708.20 L434.02 707.06 L432.01 706.64 L430.15 705.89 L428.45 704.76 L426.56 704.07 L424.81 703.04 L422.94 702.31 L420.95 701.85 L419.07 701.15 L417.35 700.05 L415.47 699.33 L413.58 698.64 L411.88 697.51 L409.87 697.11 L408.12 696.08 L406.14 695.60 L404.49 694.35 L402.65 693.54 L400.73 692.93 L398.81 692.31 L397.06 691.30 L395.25 690.41 L393.38 689.68 L391.35 689.31 L389.62 688.26 L387.68 687.67 L385.93 686.66 L384.18 685.65 L382.31 684.90 L380.32 684.45 L378.54 683.50 L376.64 682.84 L374.76 682.13 L373.05 681.02 L371.20 680.23 L369.26 679.67 L367.43 678.83 L365.65 677.89 L363.81 677.08 L361.90 676.44 L359.97 675.84 L358.12 675.07 L356.29 674.23 L354.59 673.08 L352.67 672.48 L350.86 671.60 L348.94 670.97 L347.10 670.18 L345.20 669.49 L343.54 668.26 L341.61 667.68 L339.65 667.15 L337.94 666.05 L336.07 665.31 L334.22 664.52 L332.41 663.64 L330.53 662.94 L328.74 662.00 L326.92 661.16 L324.94 660.68 L323.15 659.76 L321.23 659.12 L319.39 658.31 L317.54 657.55 L315.76 656.60 L313.84 655.98 L311.99 655.19 L310.26 654.12 L308.40 653.36 L306.53 652.64 L304.72 651.76 L302.76 651.22 L300.98 650.29 L299.04 649.72 L297.20 648.89 L295.31 648.22 L293.62 647.05 L291.80 646.19 L289.81 645.74 L287.98 644.91 L286.07 644.26 L284.23 643.46 L282.50 642.40 L280.71 641.47 L278.68 641.12 L276.87 640.24 L275.14 639.17 L273.17 638.68 L271.47 637.53 L269.50 637.03 L267.68 636.17 L265.77 635.53 L263.95 634.69 L262.13 633.83 L260.25 633.12 L258.51 632.08 L256.49 631.68 L254.79 630.56 L252.98 629.68 L251.02 629.15 L249.14 628.43 L247.28 627.68 L245.42 626.92 L243.74 625.73 L241.85 625.05 L239.86 624.58 L238.12 623.55 L236.31 622.68 L234.39 622.05 L232.48 621.41 L230.72 620.41 L228.86 619.66 L227.16 618.53 L225.17 618.08 L223.45 616.98 L221.59 616.22 L219.68 615.59 L217.72 615.05 L216.04 613.88 L214.02 613.49 L212.28 612.44 L210.33 611.91 L208.48 611.12 L206.71 610.15 L204.80 609.51 L203.15 608.25 L201.20 607.69 L199.43 606.73 L197.60 605.91 L195.70 605.23 L193.83 604.50 L191.94 603.80 L190.17 602.85 L188.29 602.12 L186.32 601.61 L184.56 600.62 L182.69 599.89 L180.87 599.04 L179.07 598.15 L177.21 597.37 L175.34 596.65 L173.54 595.74 L171.70 594.93 L169.68 594.54 L167.85 593.72 L165.98 592.99 L164.16 592.13 L162.50 590.90 L160.50 590.47 L158.68 589.61 L156.84 588.81 L155.00 588.00" fill="none" stroke="#140f38" stroke-width="2.8" stroke-linecap="round"/><path d="M142.57 581.47 L144.56 580.74 L146.72 581.25 L148.67 580.26 L150.83 580.79 L152.87 580.45 L154.75 578.90 L156.92 579.48 L158.87 578.48 L160.45 578.58 L160.70 581.10 L159.48 582.93 L157.83 584.54 L157.16 586.62 L156.12 588.53 L155.55 590.67 L154.47 592.55 L154.00 594.73 L152.59 596.52 L151.19 595.02 L150.63 592.97 L148.75 591.80 L147.67 590.09 L146.63 588.36 L145.96 586.38 L144.91 584.65 L143.01 583.49 L142.56 581.37Z" fill="#140f38" fill-opacity="0.4" stroke="#140f38" stroke-opacity="0.35" stroke-width="2.6" stroke-linejoin="round"/><path d="M142.60 581.70 L144.64 581.32 L146.65 580.72 L148.67 580.29 L150.79 580.47 L152.85 580.30 L154.83 579.46 L156.93 579.58 L158.99 579.35 L160.73 578.72 L160.26 580.89 L159.39 582.88 L158.43 584.83 L157.46 586.77 L156.10 588.53 L155.17 590.48 L154.51 592.57 L153.80 594.64 L152.55 596.54 L151.37 594.91 L150.48 593.07 L149.40 591.36 L148.32 589.66 L147.00 588.11 L145.89 586.42 L144.78 584.74 L143.60 583.10 L142.56 581.37Z" fill="#140f38" stroke="#140f38" stroke-width="1.5" stroke-linejoin="round"/><path d="M414.96 809.06 L413.47 807.67 L411.81 806.56 L409.79 805.99 L408.30 804.59 L406.25 804.08 L404.48 803.13 L403.08 801.59 L401.37 800.55 L399.40 799.91 L397.75 798.77 L396.36 797.22 L395.12 795.45 L393.34 794.51 L390.96 794.52 L389.52 793.05 L387.87 791.90 L386.13 790.90 L384.30 790.05 L383.00 788.36 L381.52 786.95 L379.44 786.49 L377.58 785.68 L375.83 784.70 L374.06 783.74 L373.02 781.65 L370.87 781.29 L369.61 779.55 L367.98 778.38 L365.68 778.25 L364.08 777.03 L362.50 775.78 L361.20 774.09 L359.49 773.05 L357.42 772.56 L355.86 771.27 L354.09 770.33 L352.50 769.09 L351.09 767.58 L348.95 767.21 L347.73 765.39 L346.14 764.17 L344.17 763.52 L342.79 761.95 L341.09 760.90 L338.74 760.86 L337.76 758.67 L335.39 758.66 L334.22 756.76 L331.94 756.60 L330.41 755.28 L328.84 754.01 L327.50 752.40 L325.67 751.53 L323.57 751.09 L322.48 749.08 L320.76 748.04 L318.77 747.44 L316.69 746.98 L315.20 745.59 L313.52 744.50 L311.94 743.25 L310.70 741.46 L308.71 740.85 L307.22 739.47 L304.88 739.40 L303.35 738.08 L302.08 736.35 L300.05 735.79 L298.27 734.87 L296.43 734.01 L294.74 732.95 L293.36 731.38 L291.79 730.12 L289.97 729.24 L288.43 727.93 L286.50 727.22 L284.58 726.51 L283.45 724.55 L281.47 723.92 L279.92 722.63 L278.13 721.71 L276.35 720.77 L274.48 719.99 L273.00 718.58 L271.31 717.50 L269.47 716.66 L267.70 715.70 L266.40 714.01 L264.32 713.55 L263.37 711.32 L261.23 710.93 L259.62 709.74 L258.00 708.55 L255.88 708.15 L254.26 706.96 L253.16 704.96 L251.27 704.19 L249.53 703.20 L247.71 702.32 L246.38 700.69 L244.47 699.95 L243.03 698.48 L241.38 697.34 L239.75 696.18 L237.91 695.33 L236.18 694.32 L234.31 693.52 L232.68 692.35 L231.03 691.21 L229.30 690.20 L227.86 688.72 L226.21 687.59 L223.82 687.60 L222.74 685.57 L220.93 684.68 L219.23 683.62 L217.81 682.12 L215.38 682.20 L214.06 680.55 L212.28 679.60 L211.09 677.75 L208.73 677.73 L207.38 676.11 L205.33 675.60 L204.17 673.69 L202.25 672.97 L200.78 671.56 L198.72 671.06 L197.53 669.20 L195.08 669.30 L193.58 667.93 L192.33 666.16 L190.77 664.89 L188.99 663.95 L186.87 663.54 L185.02 662.72 L183.87 660.80 L182.00 660.00" fill="none" stroke="#140f38" stroke-opacity="0.35" stroke-width="3.4" stroke-linecap="round"/><path d="M415.07 808.88 L413.17 808.14 L411.76 806.62 L409.94 805.75 L408.10 804.92 L406.55 803.61 L404.82 802.60 L403.05 801.64 L401.62 800.17 L399.94 799.06 L397.99 798.39 L396.41 797.15 L394.67 796.16 L393.11 794.88 L391.24 794.08 L389.62 792.89 L387.96 791.77 L386.29 790.66 L384.59 789.60 L382.95 788.44 L381.37 787.18 L379.68 786.11 L377.99 785.04 L376.27 784.00 L374.39 783.22 L372.71 782.14 L371.09 780.95 L369.46 779.78 L367.76 778.71 L365.99 777.76 L364.51 776.36 L362.60 775.62 L360.82 774.69 L359.15 773.58 L357.50 772.44 L355.98 771.09 L354.33 769.96 L352.38 769.28 L350.76 768.10 L349.07 767.02 L347.56 765.67 L345.90 764.53 L344.01 763.77 L342.27 762.77 L340.86 761.26 L339.17 760.17 L337.40 759.22 L335.64 758.27 L334.04 757.05 L332.35 755.96 L330.58 755.01 L328.82 754.05 L327.21 752.84 L325.57 751.69 L323.77 750.78 L322.18 749.55 L320.34 748.71 L318.91 747.22 L316.98 746.52 L315.30 745.44 L313.84 743.98 L312.15 742.91 L310.46 741.84 L308.74 740.81 L307.05 739.72 L305.36 738.66 L303.59 737.71 L301.74 736.87 L300.26 735.46 L298.61 734.33 L296.92 733.25 L294.98 732.57 L293.29 731.48 L291.82 730.06 L290.05 729.11 L288.50 727.82 L286.84 726.69 L284.98 725.89 L283.36 724.69 L281.67 723.62 L279.99 722.53 L278.20 721.61 L276.60 720.39 L274.72 719.60 L273.30 718.10 L271.56 717.11 L269.89 715.99 L268.10 715.08 L266.32 714.13 L264.72 712.93 L263.10 711.73 L261.37 710.72 L259.54 709.86 L257.82 708.84 L256.26 707.56 L254.52 706.56 L252.82 705.49 L251.13 704.41 L249.51 703.23 L247.91 702.01 L246.29 700.82 L244.53 699.86 L242.63 699.11 L241.21 697.60 L239.44 696.66 L237.79 695.51 L236.07 694.49 L234.29 693.54 L232.60 692.47 L230.83 691.53 L229.33 690.15 L227.44 689.38 L225.96 687.98 L224.34 686.78 L222.58 685.83 L220.87 684.78 L219.24 683.60 L217.61 682.44 L215.87 681.44 L214.24 680.27 L212.38 679.46 L210.55 678.60 L209.05 677.22 L207.37 676.13 L205.76 674.93 L203.99 673.98 L202.22 673.03 L200.41 672.13 L198.99 670.63 L197.24 669.65 L195.66 668.39 L193.85 667.51 L192.24 666.30 L190.53 665.26 L188.91 664.07 L187.05 663.26 L185.51 661.96 L183.66 661.13 L182.00 660.00" fill="none" stroke="#140f38" stroke-width="2.8" stroke-linecap="round"/><path d="M173.27 653.62 L175.37 654.12 L177.47 654.17 L179.57 655.19 L181.67 654.24 L183.77 654.04 L185.87 654.71 L187.97 653.76 L190.07 654.09 L192.31 654.50 L191.50 656.38 L189.72 657.57 L188.79 659.36 L187.13 660.64 L186.57 662.70 L184.58 663.73 L184.44 666.09 L182.84 667.41 L182.08 669.32 L179.85 671.01 L179.36 668.79 L179.32 666.36 L177.52 664.72 L176.90 662.56 L176.04 660.50 L174.75 658.63 L174.23 656.42 L173.27 654.40Z" fill="#140f38" fill-opacity="0.4" stroke="#140f38" stroke-opacity="0.35" stroke-width="2.6" stroke-linejoin="round"/><path d="M173.27 654.10 L175.37 654.30 L177.47 654.25 L179.57 654.62 L181.67 654.59 L183.77 654.54 L185.87 654.47 L187.97 654.66 L190.07 654.57 L192.42 654.58 L191.22 656.18 L189.71 657.56 L188.49 659.15 L187.25 660.72 L186.21 662.44 L185.40 664.32 L184.00 665.78 L182.81 667.38 L181.66 669.02 L180.33 670.80 L179.95 668.52 L178.74 666.62 L177.68 664.65 L177.22 662.41 L175.93 660.55 L174.82 658.60 L174.29 656.39 L173.27 654.40Z" fill="#140f38" stroke="#140f38" stroke-width="1.5" stroke-linejoin="round"/><path d="M162.67 766.20 L161.55 764.49 L160.60 762.68 L159.95 760.68 L158.50 759.18 L157.90 757.15 L157.17 755.21 L156.22 753.40 L155.01 751.74 L153.99 749.97 L152.02 748.79 L151.73 746.57 L149.67 745.44 L149.27 743.29 L147.52 741.97 L146.49 740.21 L146.58 737.75 L144.39 736.70 L144.14 734.46 L142.81 732.88 L141.03 731.58 L141.05 729.17 L138.98 728.04 L139.04 725.61 L137.89 723.93 L136.38 722.45 L135.25 720.75 L133.61 719.36 L133.47 717.06 L131.50 715.87 L131.10 713.72 L130.00 712.00" fill="none" stroke="#140f38" stroke-opacity="0.35" stroke-width="3.4" stroke-linecap="round"/><path d="M163.22 765.87 L162.03 764.20 L160.67 762.64 L159.92 760.71 L158.85 758.97 L157.59 757.34 L156.75 755.46 L155.59 753.78 L154.44 752.09 L153.43 750.31 L152.24 748.65 L151.18 746.91 L150.42 744.98 L149.08 743.40 L148.24 741.53 L146.96 739.91 L145.81 738.23 L144.65 736.54 L144.08 734.50 L142.90 732.82 L141.96 731.01 L140.69 729.39 L139.36 727.81 L138.34 726.04 L137.22 724.33 L136.44 722.42 L135.39 720.67 L134.49 718.83 L133.09 717.29 L131.99 715.57 L130.92 713.83 L130.00 712.00" fill="none" stroke="#140f38" stroke-width="2.8" stroke-linecap="round"/><path d="M123.03 699.05 L124.94 699.75 L126.45 701.29 L128.33 702.05 L130.20 702.85 L131.63 704.56 L133.90 704.51 L135.38 706.12 L137.41 706.56 L139.59 707.93 L137.76 709.16 L135.39 709.50 L133.28 710.26 L132.07 712.52 L129.64 712.76 L128.14 714.53 L125.88 715.04 L123.87 715.97 L122.61 717.57 L121.90 715.54 L121.82 713.54 L123.18 711.58 L123.15 709.58 L123.23 707.58 L122.68 705.56 L121.95 703.54 L122.52 701.55 L122.79 699.56Z" fill="#140f38" fill-opacity="0.4" stroke="#140f38" stroke-opacity="0.35" stroke-width="2.6" stroke-linejoin="round"/><path d="M122.67 699.82 L124.75 700.15 L126.51 701.17 L128.42 701.88 L130.00 703.28 L131.98 703.81 L133.90 704.51 L135.64 705.56 L137.52 706.33 L139.28 707.43 L137.33 708.45 L135.42 709.55 L133.73 711.02 L131.69 711.89 L129.97 713.30 L127.94 714.20 L125.92 715.11 L124.23 716.57 L122.48 717.56 L122.13 715.55 L122.30 713.55 L122.63 711.56 L122.14 709.55 L122.59 707.56 L122.64 705.56 L122.82 703.56 L123.04 701.57 L122.79 699.56Z" fill="#140f38" stroke="#140f38" stroke-width="1.5" stroke-linejoin="round"/></g></svg>
</body></html>
